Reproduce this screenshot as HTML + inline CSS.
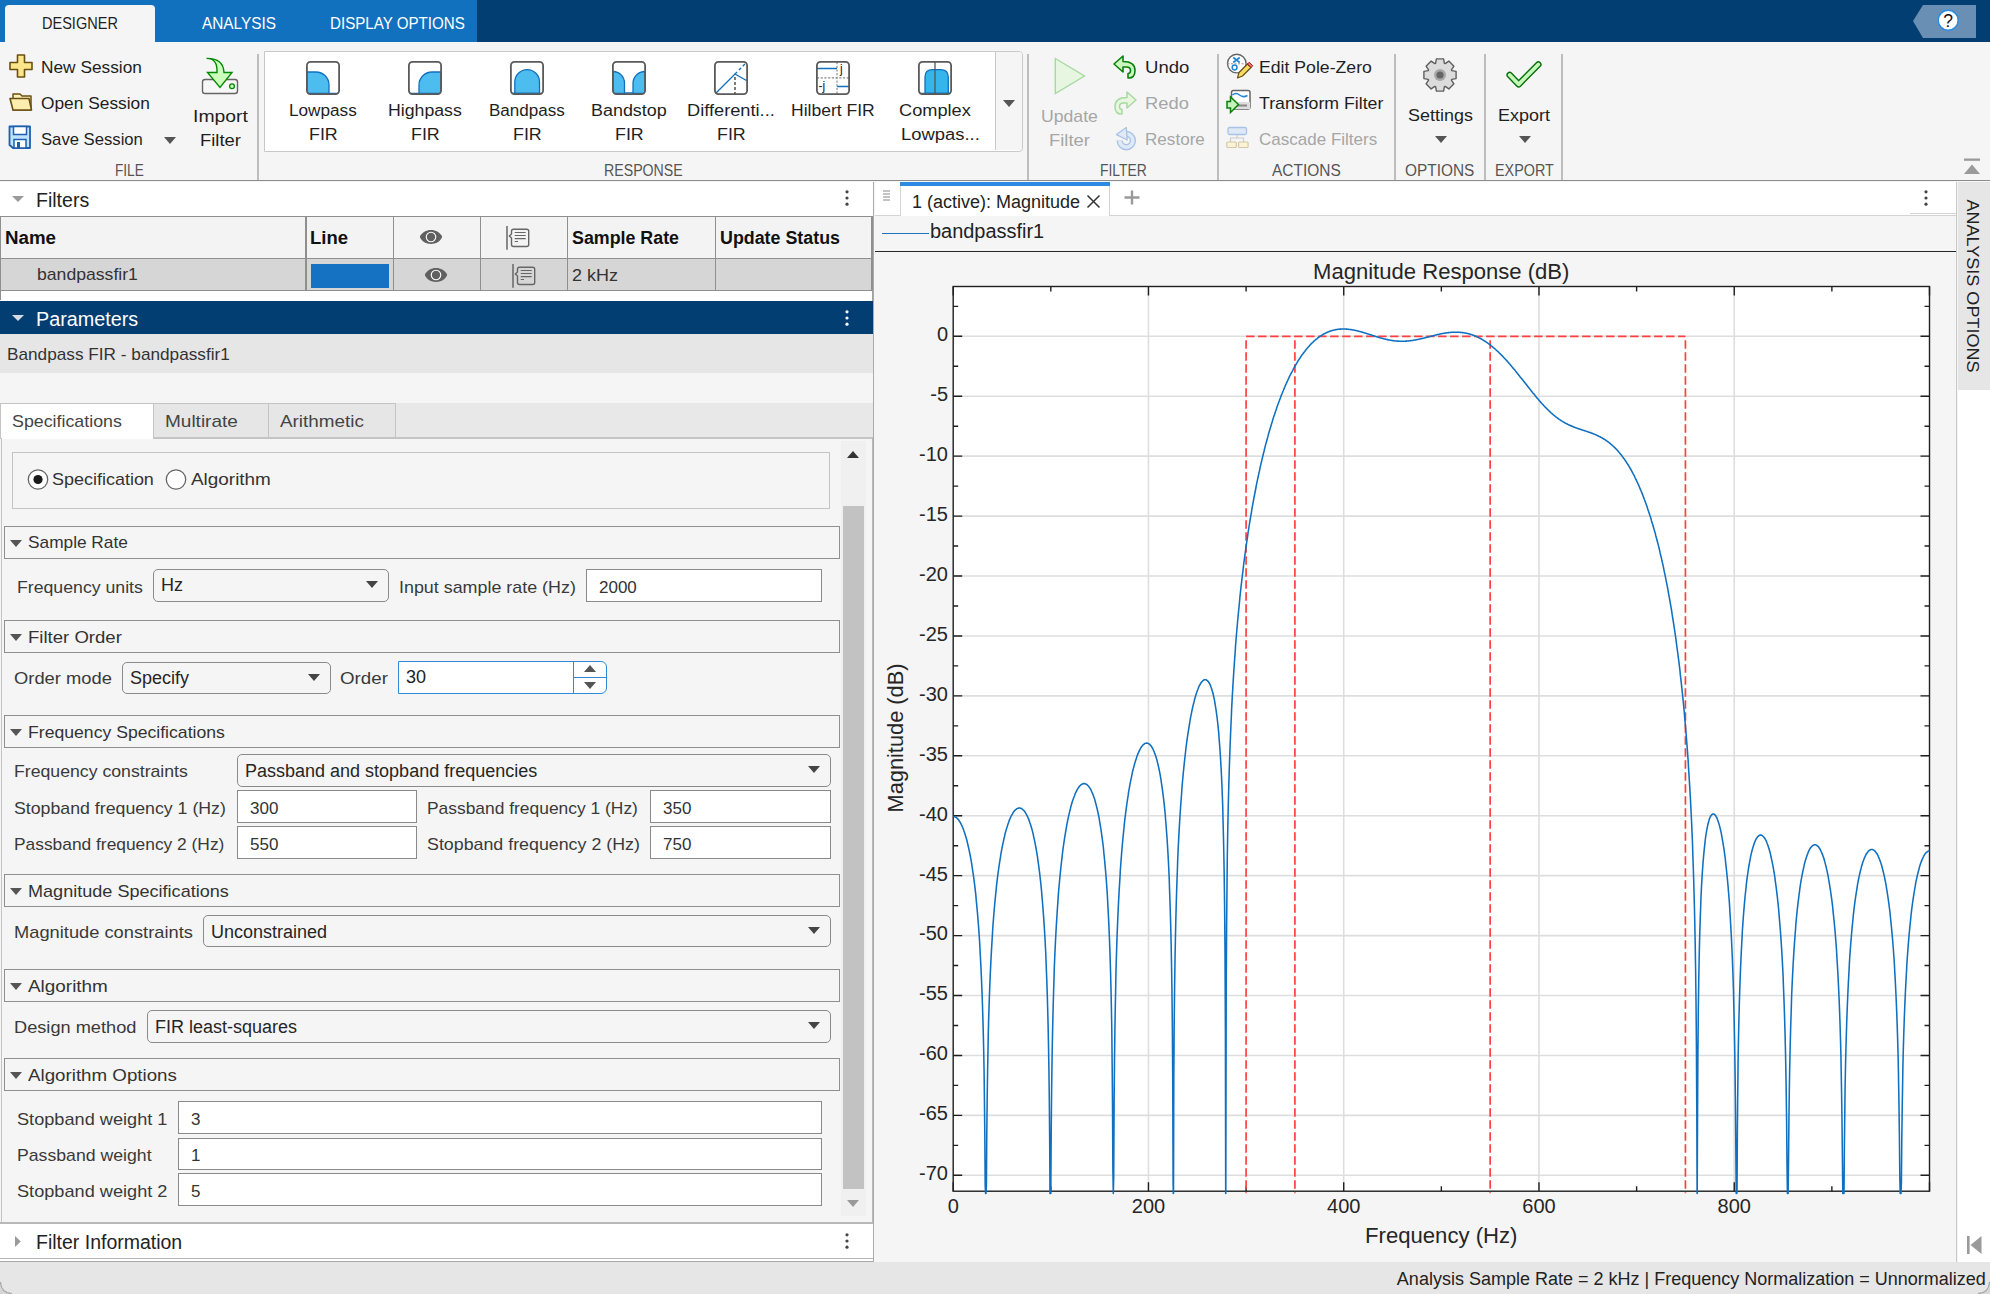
<!DOCTYPE html>
<html><head><meta charset="utf-8"><title>Filter Designer</title>
<style>
html,body{margin:0;padding:0}
body{width:1990px;height:1294px;position:relative;overflow:hidden;background:#f5f5f5;font-family:"Liberation Sans",sans-serif}
.t{position:absolute;line-height:1;white-space:nowrap;transform-origin:0 50%}
.r{position:absolute}
.s{position:absolute;overflow:visible}
</style></head><body>
<div class="r" style="left:0.00px;top:0.00px;width:1990.00px;height:42.00px;background:#033e72"></div>
<div class="r" style="left:0.00px;top:0.00px;width:477.00px;height:42.00px;background:#1171be"></div>
<div class="r" style="left:5.00px;top:5.00px;width:150.00px;height:37.00px;background:#f5f5f5;border-radius:4px 4px 0 0"></div>
<div class="t" style="left:42.06px;top:14.91px;font-size:17.00px;color:#1f1f1f;transform:scaleX(0.8544);">DESIGNER</div>
<div class="t" style="left:201.56px;top:14.91px;font-size:17.00px;color:#fff;transform:scaleX(0.9021);">ANALYSIS</div>
<div class="t" style="left:330.06px;top:14.91px;font-size:17.00px;color:#fff;transform:scaleX(0.8904);">DISPLAY OPTIONS</div>
<svg class="s" style="left:1913.00px;top:5.00px;" width="63.00" height="33.00" viewBox="0 0 63.00 33.00"><path d="M10 0 L63 0 L63 33 L10 33 L0 16 Z" fill="#6990b4"/><circle cx="35.2" cy="15.2" r="10" fill="#fff" stroke="#2b8ce0" stroke-width="1.5"/><text x="35.2" y="21.6" text-anchor="middle" font-family="Liberation Sans" font-size="17.5" fill="#111">?</text></svg>
<div class="r" style="left:0.00px;top:42.00px;width:1990.00px;height:138.00px;background:#f5f5f5"></div>
<div class="r" style="left:0.00px;top:180.00px;width:1990.00px;height:1.20px;background:#8c8c8c"></div>
<div class="r" style="left:257.40px;top:54.00px;width:1.20px;height:126.00px;background:#bdbdbd"></div>
<div class="r" style="left:1027.40px;top:54.00px;width:1.20px;height:126.00px;background:#bdbdbd"></div>
<div class="r" style="left:1217.40px;top:54.00px;width:1.20px;height:126.00px;background:#bdbdbd"></div>
<div class="r" style="left:1394.40px;top:54.00px;width:1.20px;height:126.00px;background:#bdbdbd"></div>
<div class="r" style="left:1484.40px;top:54.00px;width:1.20px;height:126.00px;background:#bdbdbd"></div>
<div class="r" style="left:1561.40px;top:54.00px;width:1.20px;height:126.00px;background:#bdbdbd"></div>
<svg class="s" style="left:9.00px;top:54.00px;" width="24.00" height="24.00" viewBox="0 0 24.00 24.00"><path d="M8.5 1 H15.5 V8.5 H23 V15.5 H15.5 V23 H8.5 V15.5 H1 V8.5 H8.5 Z" fill="#fde68a" stroke="#6b4f12" stroke-width="1.6" stroke-linejoin="round"/></svg>
<div class="t" style="left:41.06px;top:58.61px;font-size:17.00px;color:#1f1f1f;transform:scaleX(1.0167);">New Session</div>
<svg class="s" style="left:9.00px;top:90.00px;" width="24.00" height="22.00" viewBox="0 0 24.00 22.00"><path d="M4 4 H11 L13 6 H22 V20 H4 Z" fill="#fdf0b8" stroke="#6b4f12" stroke-width="1.5" stroke-linejoin="round"/><path d="M1 8.5 H20 L22.5 20 H4 Z" fill="#fdeeb0" stroke="#6b4f12" stroke-width="1.6" stroke-linejoin="round"/></svg>
<div class="t" style="left:41.06px;top:94.61px;font-size:17.00px;color:#1f1f1f;transform:scaleX(1.0195);">Open Session</div>
<svg class="s" style="left:8.00px;top:125.00px;" width="24.00" height="25.00" viewBox="0 0 24.00 25.00"><path d="M1.5 1.5 H22 V23 H5 L1.5 20 Z" fill="#bfe2ff" stroke="#1d5fb0" stroke-width="1.8" stroke-linejoin="round"/><rect x="5.5" y="1.5" width="13" height="8" fill="#fff" stroke="#1d5fb0" stroke-width="1.5"/><rect x="6" y="14.5" width="12" height="8.5" fill="#fff" stroke="#1d5fb0" stroke-width="1.5"/><rect x="9" y="17" width="3" height="6" fill="#1d5fb0"/></svg>
<div class="t" style="left:41.06px;top:130.61px;font-size:17.00px;color:#1f1f1f;transform:scaleX(0.9800);">Save Session</div>
<svg class="s" style="left:164.00px;top:137.00px;" width="12.00" height="7.00" viewBox="0 0 12.00 7.00"><path d="M0 0 L12.00 0 L6.00 7.00 Z" fill="#555"/></svg>
<svg class="s" style="left:200.00px;top:56.00px;" width="40.00" height="40.00" viewBox="0 0 40.00 40.00"><rect x="2.5" y="23.5" width="35" height="14" rx="2.5" fill="#f7f7f7" stroke="#666" stroke-width="1.4"/><circle cx="32" cy="30.3" r="2.4" fill="#ccffbb" stroke="#008a00" stroke-width="1.3"/><path d="M6.5 2.4 C14 2.4 17.5 7 17 16.5 L7.5 16.5 L20 31.5 L32 16.5 L24 16.5 C23.5 7 17 2.2 6.5 2.4 Z" fill="#ccffbb" stroke="#008a00" stroke-width="1.4" stroke-linejoin="miter"/></svg>
<div class="t" style="left:192.56px;top:107.61px;font-size:17.00px;color:#1f1f1f;transform:scaleX(1.1389);">Import</div>
<div class="t" style="left:199.56px;top:131.61px;font-size:17.00px;color:#1f1f1f;transform:scaleX(1.0818);">Filter</div>
<div class="t" style="left:115.12px;top:163.46px;font-size:16.00px;color:#555;transform:scaleX(0.8511);">FILE</div>
<div class="r" style="left:264px;top:51px;width:757px;height:99px;border:1px solid #c9c9c9;border-radius:0 4px 4px 0;background:#fff"></div>
<div class="r" style="left:994.50px;top:52.00px;width:26.50px;height:98.00px;background:#f5f5f5;border-radius:0 3px 3px 0;border-left:1px solid #c9c9c9"></div>
<svg class="s" style="left:1003.00px;top:99.50px;" width="12.00" height="7.00" viewBox="0 0 12.00 7.00"><path d="M0 0 L12.00 0 L6.00 7.00 Z" fill="#555"/></svg>
<svg class="s" style="left:306.00px;top:61.00px;" width="34.00" height="34.00" viewBox="0 0 34.00 34.00"><defs><clipPath id="cp0"><rect x="1" y="1" width="32" height="32" rx="3"/></clipPath></defs><rect x="0" y="0" width="34" height="34" fill="#fff"/><g clip-path="url(#cp0)"><path d="M1 11 H10 A13 13 0 0 1 23 24 V32.4 H1 Z" fill="#4dbcee" stroke="#1170be" stroke-width="1.3"/><path d="M23 32.4 H33" stroke="#1170be" stroke-width="1.3"/></g><rect x="0.9" y="0.9" width="32.2" height="32.2" rx="3.5" fill="none" stroke="#5a5a5a" stroke-width="1.8"/></svg>
<div class="t" style="left:289.12px;top:102.96px;font-size:16.00px;color:#1f1f1f;transform:scaleX(1.0730);">Lowpass</div>
<div class="t" style="left:308.62px;top:127.46px;font-size:16.00px;color:#1f1f1f;transform:scaleX(1.1159);">FIR</div>
<svg class="s" style="left:408.00px;top:61.00px;" width="34.00" height="34.00" viewBox="0 0 34.00 34.00"><defs><clipPath id="cp1"><rect x="1" y="1" width="32" height="32" rx="3"/></clipPath></defs><rect x="0" y="0" width="34" height="34" fill="#fff"/><g clip-path="url(#cp1)"><path d="M33 11 H24 A13 13 0 0 0 11 24 V32.4 H33 Z" fill="#4dbcee" stroke="#1170be" stroke-width="1.3"/><path d="M11 32.4 H1" stroke="#1170be" stroke-width="1.3"/></g><rect x="0.9" y="0.9" width="32.2" height="32.2" rx="3.5" fill="none" stroke="#5a5a5a" stroke-width="1.8"/></svg>
<div class="t" style="left:388.12px;top:102.96px;font-size:16.00px;color:#1f1f1f;transform:scaleX(1.1058);">Highpass</div>
<div class="t" style="left:410.62px;top:127.46px;font-size:16.00px;color:#1f1f1f;transform:scaleX(1.1159);">FIR</div>
<svg class="s" style="left:510.00px;top:61.00px;" width="34.00" height="34.00" viewBox="0 0 34.00 34.00"><defs><clipPath id="cp2"><rect x="1" y="1" width="32" height="32" rx="3"/></clipPath></defs><rect x="0" y="0" width="34" height="34" fill="#fff"/><g clip-path="url(#cp2)"><path d="M4.8 32.4 V21 A12.35 12.35 0 0 1 29.5 21 V32.4 Z" fill="#4dbcee" stroke="#1170be" stroke-width="1.3"/><path d="M1 32.4 H33" stroke="#1170be" stroke-width="1.3"/></g><rect x="0.9" y="0.9" width="32.2" height="32.2" rx="3.5" fill="none" stroke="#5a5a5a" stroke-width="1.8"/></svg>
<div class="t" style="left:489.12px;top:102.96px;font-size:16.00px;color:#1f1f1f;transform:scaleX(1.0645);">Bandpass</div>
<div class="t" style="left:512.62px;top:127.46px;font-size:16.00px;color:#1f1f1f;transform:scaleX(1.1159);">FIR</div>
<svg class="s" style="left:612.00px;top:61.00px;" width="34.00" height="34.00" viewBox="0 0 34.00 34.00"><defs><clipPath id="cp3"><rect x="1" y="1" width="32" height="32" rx="3"/></clipPath></defs><rect x="0" y="0" width="34" height="34" fill="#fff"/><g clip-path="url(#cp3)"><path d="M1 10.5 A11.5 11.5 0 0 1 12.5 22 V32.4 H1 Z M33 10.5 A12 12 0 0 0 21 22.5 V32.4 H33 Z" fill="#4dbcee" stroke="#1170be" stroke-width="1.3"/><path d="M12.5 32 H21" stroke="#1170be" stroke-width="1.6"/></g><rect x="0.9" y="0.9" width="32.2" height="32.2" rx="3.5" fill="none" stroke="#5a5a5a" stroke-width="1.8"/></svg>
<div class="t" style="left:591.12px;top:102.96px;font-size:16.00px;color:#1f1f1f;transform:scaleX(1.1205);">Bandstop</div>
<div class="t" style="left:614.62px;top:127.46px;font-size:16.00px;color:#1f1f1f;transform:scaleX(1.1159);">FIR</div>
<svg class="s" style="left:714.00px;top:61.00px;" width="34.00" height="34.00" viewBox="0 0 34.00 34.00"><defs><clipPath id="cp4"><rect x="1" y="1" width="32" height="32" rx="3"/></clipPath></defs><rect x="0" y="0" width="34" height="34" fill="#fff"/><g clip-path="url(#cp4)"><path d="M1.5 32.5 L21 13 L32.5 19.5" fill="none" stroke="#1170be" stroke-width="1.4"/><path d="M21 13 L31 3" fill="none" stroke="#1170be" stroke-width="1.4" stroke-dasharray="3 2.5"/><path d="M21 16 V33" stroke="#333" stroke-width="1.3" stroke-dasharray="3 2"/></g><rect x="0.9" y="0.9" width="32.2" height="32.2" rx="3.5" fill="none" stroke="#5a5a5a" stroke-width="1.8"/></svg>
<div class="t" style="left:687.12px;top:102.96px;font-size:16.00px;color:#1f1f1f;transform:scaleX(1.1387);">Differenti...</div>
<div class="t" style="left:716.62px;top:127.46px;font-size:16.00px;color:#1f1f1f;transform:scaleX(1.1159);">FIR</div>
<svg class="s" style="left:816.00px;top:61.00px;" width="34.00" height="34.00" viewBox="0 0 34.00 34.00"><defs><clipPath id="cp5"><rect x="1" y="1" width="32" height="32" rx="3"/></clipPath></defs><rect x="0" y="0" width="34" height="34" fill="#fff"/><g clip-path="url(#cp5)"><path d="M1 7.5 H21" stroke="#1170be" stroke-width="1.4"/><path d="M21 25.5 H33" stroke="#1170be" stroke-width="1.4"/><path d="M1 16.8 H33 M21 1 V33" stroke="#8a8a8a" stroke-width="1.2" stroke-dasharray="2.2 1.5"/><text x="24" y="12" font-family="Liberation Sans" font-size="12" fill="#222">j</text><text x="2.5" y="28.5" font-family="Liberation Sans" font-size="12" fill="#222">-j</text></g><rect x="0.9" y="0.9" width="32.2" height="32.2" rx="3.5" fill="none" stroke="#5a5a5a" stroke-width="1.8"/></svg>
<div class="t" style="left:791.12px;top:102.96px;font-size:16.00px;color:#1f1f1f;transform:scaleX(1.0955);">Hilbert FIR</div>
<svg class="s" style="left:918.00px;top:61.00px;" width="34.00" height="34.00" viewBox="0 0 34.00 34.00"><defs><clipPath id="cp6"><rect x="1" y="1" width="32" height="32" rx="3"/></clipPath></defs><rect x="0" y="0" width="34" height="34" fill="#fff"/><g clip-path="url(#cp6)"><path d="M7 32.4 V16 Q7 8.7 14.5 8.7 H22.5 Q30.3 8.7 30.3 16 V32.4 Z" fill="#34b6ec" stroke="#1170be" stroke-width="1.3"/><path d="M1 32.4 H33" stroke="#1170be" stroke-width="1.3"/><path d="M17 1 V33" stroke="#555" stroke-width="1.3"/></g><rect x="0.9" y="0.9" width="32.2" height="32.2" rx="3.5" fill="none" stroke="#5a5a5a" stroke-width="1.8"/></svg>
<div class="t" style="left:899.12px;top:102.96px;font-size:16.00px;color:#1f1f1f;transform:scaleX(1.1366);">Complex</div>
<div class="t" style="left:900.62px;top:127.46px;font-size:16.00px;color:#1f1f1f;transform:scaleX(1.1500);">Lowpas...</div>
<div class="t" style="left:604.12px;top:163.46px;font-size:16.00px;color:#555;transform:scaleX(0.8858);">RESPONSE</div>
<svg class="s" style="left:1053.00px;top:56.00px;" width="36.00" height="40.00" viewBox="0 0 36.00 40.00"><path d="M2.3 2.5 L31.5 20 L2.3 37.5 Z" fill="#e6f6e0" stroke="#a9d9a0" stroke-width="1.4" stroke-linejoin="miter"/></svg>
<div class="t" style="left:1040.57px;top:107.61px;font-size:17.00px;color:#a6a6a6;transform:scaleX(1.0374);">Update</div>
<div class="t" style="left:1048.57px;top:131.61px;font-size:17.00px;color:#a6a6a6;transform:scaleX(1.0818);">Filter</div>
<svg class="s" style="left:1111.00px;top:53.00px;" width="28.00" height="28.00" viewBox="0 0 28.00 28.00"><path d="M3 11 L12 3 V8.5 Q24 8.5 24 17.5 Q24 25.5 17 25 V20.5 Q19.5 20.5 19.5 17.5 Q19.5 14 15.5 14 L12 14 V19 Z" fill="#ccf5c0" stroke="#0a800a" stroke-width="1.6" stroke-linejoin="round"/></svg>
<div class="t" style="left:1145.07px;top:58.61px;font-size:17.00px;color:#1f1f1f;transform:scaleX(1.0917);">Undo</div>
<svg class="s" style="left:1111.00px;top:89.00px;" width="28.00" height="28.00" viewBox="0 0 28.00 28.00"><path d="M25 11 L16 3 V8.5 Q4 8.5 4 17.5 Q4 25.5 11 25 V20.5 Q8.5 20.5 8.5 17.5 Q8.5 14 12.5 14 L16 14 V19 Z" fill="#e6f6e0" stroke="#a9d9a0" stroke-width="1.5" stroke-linejoin="round"/></svg>
<div class="t" style="left:1145.07px;top:94.61px;font-size:17.00px;color:#a6a6a6;transform:scaleX(1.0794);">Redo</div>
<svg class="s" style="left:1113.00px;top:126.00px;" width="26.00" height="26.00" viewBox="0 0 26.00 26.00"><path d="M13.3 8 A6.6 6.6 0 1 1 6.7 14.6" fill="none" stroke="#a9c3e6" stroke-width="6.4"/><path d="M13.3 8 A6.6 6.6 0 1 1 6.7 14.6" fill="none" stroke="#deeaf8" stroke-width="3.6"/><path d="M13.3 1.4 L3.5 8.6 L14.2 14 Z" fill="#deeaf8" stroke="#a9c3e6" stroke-width="1.3" stroke-linejoin="round"/></svg>
<div class="t" style="left:1145.07px;top:130.61px;font-size:17.00px;color:#a6a6a6;transform:scaleX(1.0058);">Restore</div>
<div class="t" style="left:1099.62px;top:163.46px;font-size:16.00px;color:#555;transform:scaleX(0.8670);">FILTER</div>
<svg class="s" style="left:1226.00px;top:53.00px;" width="30.00" height="30.00" viewBox="0 0 30.00 30.00"><circle cx="10.8" cy="10.6" r="9.3" fill="#fff" stroke="#666" stroke-width="1.4"/><path d="M1.5 10.8 H20.5" stroke="#999" stroke-width="1" stroke-dasharray="2 1.5"/><path d="M7.2 4.5 L13.7 9.5 M13.7 4.5 L7.2 9.5" stroke="#1f86d6" stroke-width="1.7"/><circle cx="8.6" cy="14.5" r="2.4" fill="none" stroke="#1f86d6" stroke-width="1.5"/><path d="M11.5 25 L13 19.5 L21.5 11 L25 14.5 L16.5 23 Z" fill="#f6dc63" stroke="#6b4f12" stroke-width="1.2" stroke-linejoin="round"/><path d="M21.5 11 L23.2 9.3 L26.7 12.8 L25 14.5 Z" fill="#f08080" stroke="#a01010" stroke-width="1"/></svg>
<div class="t" style="left:1259.07px;top:58.61px;font-size:17.00px;color:#1f1f1f;transform:scaleX(1.0387);">Edit Pole-Zero</div>
<svg class="s" style="left:1226.00px;top:89.00px;" width="30.00" height="30.00" viewBox="0 0 30.00 30.00"><rect x="5.5" y="1.5" width="18.5" height="18.5" rx="2" fill="#fff" stroke="#666" stroke-width="1.5"/><path d="M5.5 13 H24 V20 H5.5 Z" fill="#ddd"/><path d="M10 16.5 H21" stroke="#888" stroke-width="2"/><path d="M6.5 6 Q10 3 13.5 6 T21.5 6.5" fill="none" stroke="#1f86d6" stroke-width="1.5"/><path d="M1 12.5 H4.5 V8 L12.5 15.5 L4.5 23.5 V19 H1 Z" fill="#c4f4bb" stroke="#0a800a" stroke-width="1.5" stroke-linejoin="miter"/></svg>
<div class="t" style="left:1259.07px;top:94.61px;font-size:17.00px;color:#1f1f1f;transform:scaleX(1.0423);">Transform Filter</div>
<svg class="s" style="left:1226.00px;top:126.00px;" width="30.00" height="26.00" viewBox="0 0 30.00 26.00"><rect x="2" y="1.5" width="18.5" height="7" rx="1.5" fill="#dde9f7" stroke="#a9c3e6" stroke-width="1.3"/><path d="M11 8.5 V12 M4.5 16 V12 H17.5 V16" fill="none" stroke="#ccc" stroke-width="1.2"/><rect x="0.8" y="16" width="9.5" height="5.5" rx="1" fill="#fbf3d4" stroke="#d4c9a4" stroke-width="1.2"/><rect x="12.6" y="16" width="9.5" height="5.5" rx="1" fill="#fbf3d4" stroke="#d4c9a4" stroke-width="1.2"/></svg>
<div class="t" style="left:1259.07px;top:130.61px;font-size:17.00px;color:#a6a6a6;">Cascade Filters</div>
<div class="t" style="left:1271.62px;top:163.46px;font-size:16.00px;color:#555;transform:scaleX(0.9668);">ACTIONS</div>
<svg class="s" style="left:1420.00px;top:55.00px;" width="40.00" height="40.00" viewBox="0 0 40.00 40.00"><path d="M15.60 8.30 L16.40 3.90 L23.60 3.90 L24.40 8.30 L25.16 8.61 L28.84 6.07 L33.93 11.16 L31.39 14.84 L31.70 15.60 L36.10 16.40 L36.10 23.60 L31.70 24.40 L31.39 25.16 L33.93 28.84 L28.84 33.93 L25.16 31.39 L24.40 31.70 L23.60 36.10 L16.40 36.10 L15.60 31.70 L14.84 31.39 L11.16 33.93 L6.07 28.84 L8.61 25.16 L8.30 24.40 L3.90 23.60 L3.90 16.40 L8.30 15.60 L8.61 14.84 L6.07 11.16 L11.16 6.07 L14.84 8.61 Z" fill="#dcdcdc" stroke="#5f5f5f" stroke-width="1.4" stroke-linejoin="round"/><circle cx="20" cy="20" r="6" fill="#a8a8a8"/><circle cx="20" cy="20" r="3.6" fill="#666"/></svg>
<div class="t" style="left:1407.57px;top:107.11px;font-size:17.00px;color:#1f1f1f;transform:scaleX(1.0560);">Settings</div>
<svg class="s" style="left:1435.00px;top:135.50px;" width="12.00" height="7.00" viewBox="0 0 12.00 7.00"><path d="M0 0 L12.00 0 L6.00 7.00 Z" fill="#555"/></svg>
<div class="t" style="left:1405.37px;top:163.46px;font-size:16.00px;color:#555;transform:scaleX(0.9618);">OPTIONS</div>
<svg class="s" style="left:1503.00px;top:55.00px;" width="40.00" height="40.00" viewBox="0 0 40.00 40.00"><path d="M6.7 20 L15.6 29.3 L35.3 9.5" fill="none" stroke="#0a6e0a" stroke-width="6.6" stroke-linecap="round" stroke-linejoin="round"/><path d="M6.7 20 L15.6 29.3 L35.3 9.5" fill="none" stroke="#c4f8b8" stroke-width="3.8" stroke-linecap="round" stroke-linejoin="round"/></svg>
<div class="t" style="left:1498.07px;top:107.11px;font-size:17.00px;color:#1f1f1f;transform:scaleX(1.0557);">Export</div>
<svg class="s" style="left:1519.00px;top:135.50px;" width="12.00" height="7.00" viewBox="0 0 12.00 7.00"><path d="M0 0 L12.00 0 L6.00 7.00 Z" fill="#555"/></svg>
<div class="t" style="left:1494.62px;top:163.46px;font-size:16.00px;color:#555;transform:scaleX(0.8971);">EXPORT</div>
<svg class="s" style="left:1963.00px;top:158.00px;" width="18.00" height="17.00" viewBox="0 0 18.00 17.00"><rect x="1" y="0.5" width="16" height="2.3" fill="#9a9a9a"/><path d="M1 16 L9 6.5 L17 16 Z" fill="#9a9a9a"/></svg>
<div class="r" style="left:0.00px;top:181.50px;width:873.00px;height:1080.50px;background:#f5f5f5"></div>
<div class="r" style="left:0.00px;top:181.50px;width:873.00px;height:34.50px;background:#fff"></div>
<svg class="s" style="left:12.00px;top:196.00px;" width="12.00" height="6.00" viewBox="0 0 12.00 6.00"><path d="M0 0 H12.00 L6.00 6.00 Z" fill="#9a9a9a"/></svg>
<div class="t" style="left:35.90px;top:189.87px;font-size:20.00px;color:#222;transform:scaleX(0.9771);">Filters</div>
<svg class="s" style="left:844.00px;top:189.00px;" width="6.00" height="18.00" viewBox="0 0 6.00 18.00"><circle cx="3" cy="2.8" r="1.6" fill="#444"/><circle cx="3" cy="9" r="1.6" fill="#444"/><circle cx="3" cy="15.2" r="1.6" fill="#444"/></svg>
<div class="r" style="left:0.00px;top:216.00px;width:873.00px;height:75.00px;background:#f3f3f3"></div>
<div class="r" style="left:1.00px;top:258.00px;width:871.00px;height:33.00px;background:#d6d6d6"></div>
<div class="r" style="left:0.00px;top:291.00px;width:873.00px;height:9.50px;background:#fff"></div>
<div class="r" style="left:871.80px;top:291.00px;width:1.00px;height:9.50px;background:#a0a0a0"></div>
<div class="r" style="left:0.00px;top:215.50px;width:873.00px;height:1.50px;background:#8f8f8f"></div>
<div class="r" style="left:0.00px;top:257.50px;width:872.00px;height:1.20px;background:#8f8f8f"></div>
<div class="r" style="left:0.00px;top:290.30px;width:872.00px;height:1.20px;background:#8f8f8f"></div>
<div class="r" style="left:0.00px;top:216.00px;width:1.10px;height:84.00px;background:#8f8f8f"></div>
<div class="r" style="left:305.40px;top:216.00px;width:1.20px;height:75.00px;background:#8f8f8f"></div>
<div class="r" style="left:393.00px;top:216.00px;width:1.20px;height:75.00px;background:#8f8f8f"></div>
<div class="r" style="left:479.90px;top:216.00px;width:1.20px;height:75.00px;background:#8f8f8f"></div>
<div class="r" style="left:566.80px;top:216.00px;width:1.20px;height:75.00px;background:#8f8f8f"></div>
<div class="r" style="left:714.80px;top:216.00px;width:1.20px;height:75.00px;background:#8f8f8f"></div>
<div class="r" style="left:871.40px;top:216.00px;width:1.20px;height:75.00px;background:#8f8f8f"></div>
<div class="t" style="left:5.01px;top:228.76px;font-size:18.00px;color:#111;font-weight:bold;transform:scaleX(1.0399);">Name</div>
<div class="t" style="left:310.01px;top:228.76px;font-size:18.00px;color:#111;font-weight:bold;transform:scaleX(1.0264);">Line</div>
<div class="t" style="left:572.01px;top:228.76px;font-size:18.00px;color:#111;font-weight:bold;transform:scaleX(0.9901);">Sample Rate</div>
<div class="t" style="left:720.01px;top:228.76px;font-size:18.00px;color:#111;font-weight:bold;transform:scaleX(0.9914);">Update Status</div>
<svg class="s" style="left:419.40px;top:229.00px;" width="24.00" height="16.00" viewBox="0 0 24.00 16.00"><path d="M0.8 8 C4.5 -1.2 19.5 -1.2 23.2 8 C19.5 17.2 4.5 17.2 0.8 8 Z" fill="#606060"/><circle cx="12" cy="8" r="5.3" fill="#fff"/><circle cx="12" cy="8" r="4.2" fill="#606060"/></svg>
<svg class="s" style="left:506.30px;top:226.00px;" width="24.00" height="24.00" viewBox="0 0 24.00 24.00"><path d="M1 0 V23.7" stroke="#666" stroke-width="1.5"/><path d="M7.5 3.2 H20.7 Q22.7 3.2 22.7 5.2 V18.5 Q22.7 20.5 20.7 20.5 H7.5 Q5.5 20.5 5.5 18.5 V12 L3.4 10 L5.5 8 V5.2 Q5.5 3.2 7.5 3.2 Z" fill="none" stroke="#666" stroke-width="1.4"/><path d="M8.7 6.5 H19.7 M8.7 9.5 H19.7 M8.7 12.6 H19.7 M8.7 15.5 H12" stroke="#666" stroke-width="1.2"/></svg>
<div class="t" style="left:37.06px;top:266.31px;font-size:17.00px;color:#333;transform:scaleX(1.0362);">bandpassfir1</div>
<div class="r" style="left:311.00px;top:264.00px;width:77.50px;height:24.00px;background:#1571c1"></div>
<svg class="s" style="left:424.20px;top:267.00px;" width="24.00" height="16.00" viewBox="0 0 24.00 16.00"><path d="M0.8 8 C4.5 -1.2 19.5 -1.2 23.2 8 C19.5 17.2 4.5 17.2 0.8 8 Z" fill="#606060"/><circle cx="12" cy="8" r="5.3" fill="#fff"/><circle cx="12" cy="8" r="4.2" fill="#606060"/></svg>
<svg class="s" style="left:511.50px;top:264.30px;" width="24.00" height="24.00" viewBox="0 0 24.00 24.00"><path d="M1 0 V23.7" stroke="#666" stroke-width="1.5"/><path d="M7.5 3.2 H20.7 Q22.7 3.2 22.7 5.2 V18.5 Q22.7 20.5 20.7 20.5 H7.5 Q5.5 20.5 5.5 18.5 V12 L3.4 10 L5.5 8 V5.2 Q5.5 3.2 7.5 3.2 Z" fill="none" stroke="#666" stroke-width="1.4"/><path d="M8.7 6.5 H19.7 M8.7 9.5 H19.7 M8.7 12.6 H19.7 M8.7 15.5 H12" stroke="#666" stroke-width="1.2"/></svg>
<div class="t" style="left:572.07px;top:266.61px;font-size:17.00px;color:#333;transform:scaleX(1.0556);">2 kHz</div>
<div class="r" style="left:0.00px;top:300.50px;width:873.00px;height:33.50px;background:#033e72"></div>
<svg class="s" style="left:12.00px;top:315.00px;" width="12.00" height="6.00" viewBox="0 0 12.00 6.00"><path d="M0 0 H12.00 L6.00 6.00 Z" fill="#d4dbe3"/></svg>
<div class="t" style="left:35.90px;top:309.07px;font-size:20.00px;color:#fff;transform:scaleX(0.9886);">Parameters</div>
<svg class="s" style="left:844.00px;top:309.00px;" width="6.00" height="18.00" viewBox="0 0 6.00 18.00"><circle cx="3" cy="2.8" r="1.6" fill="#fff"/><circle cx="3" cy="9" r="1.6" fill="#fff"/><circle cx="3" cy="15.2" r="1.6" fill="#fff"/></svg>
<div class="r" style="left:0.00px;top:334.00px;width:873.00px;height:38.50px;background:#e6e6e6"></div>
<div class="t" style="left:7.06px;top:346.31px;font-size:17.00px;color:#333;transform:scaleX(1.0122);">Bandpass FIR - bandpassfir1</div>
<div class="r" style="left:0.00px;top:403.00px;width:873.00px;height:35.00px;background:#e8e8e8"></div>
<div class="r" style="left:0.00px;top:437.00px;width:873.00px;height:1.50px;background:#c4c4c4"></div>
<div class="r" style="left:0px;top:403px;width:154px;height:35.5px;background:#fff;border:1px solid #c4c4c4;border-bottom:none;box-sizing:border-box"></div>
<div class="r" style="left:153px;top:403px;width:116px;height:35px;background:#e6e6e6;border:1px solid #c4c4c4;box-sizing:border-box"></div>
<div class="r" style="left:268px;top:403px;width:128px;height:35px;background:#e6e6e6;border:1px solid #c4c4c4;box-sizing:border-box"></div>
<div class="t" style="left:12.06px;top:412.61px;font-size:17.00px;color:#444;transform:scaleX(1.0475);">Specifications</div>
<div class="t" style="left:165.06px;top:412.61px;font-size:17.00px;color:#444;transform:scaleX(1.1178);">Multirate</div>
<div class="t" style="left:280.06px;top:412.61px;font-size:17.00px;color:#444;transform:scaleX(1.1098);">Arithmetic</div>
<div class="r" style="left:0.50px;top:438.00px;width:1.20px;height:785.00px;background:#c4c4c4"></div>
<div class="r" style="left:0.00px;top:1222.00px;width:873.00px;height:2.00px;background:#b8b8b8"></div>
<div class="r" style="left:872.00px;top:438.00px;width:2.00px;height:786.00px;background:#b8b8b8"></div>
<div class="r" style="left:841.00px;top:441.00px;width:25.00px;height:775.00px;background:#f0f0f0"></div>
<div class="r" style="left:843.00px;top:506.00px;width:21.00px;height:682.60px;background:#c2c2c2"></div>
<svg class="s" style="left:847.00px;top:451.00px;" width="12.00" height="7.00" viewBox="0 0 12.00 7.00"><path d="M0 7 H12 L6 0 Z" fill="#333"/></svg>
<svg class="s" style="left:847.00px;top:1200.00px;" width="12.00" height="7.00" viewBox="0 0 12.00 7.00"><path d="M0 0 H12.00 L6.00 7.00 Z" fill="#999"/></svg>
<div class="r" style="left:12px;top:452px;width:818px;height:57px;border:1px solid #c4c4c4;box-sizing:border-box"></div>
<svg class="s" style="left:27.00px;top:469.00px;" width="22.00" height="22.00" viewBox="0 0 22.00 22.00"><circle cx="11" cy="10.5" r="9.7" fill="#fff" stroke="#666" stroke-width="1.3"/><circle cx="11" cy="10.5" r="4.6" fill="#1a1a1a"/></svg>
<div class="t" style="left:52.06px;top:471.21px;font-size:17.00px;color:#333;transform:scaleX(1.0568);">Specification</div>
<svg class="s" style="left:165.00px;top:469.00px;" width="22.00" height="22.00" viewBox="0 0 22.00 22.00"><circle cx="11" cy="10.5" r="9.7" fill="#fff" stroke="#666" stroke-width="1.3"/></svg>
<div class="t" style="left:191.06px;top:471.21px;font-size:17.00px;color:#333;transform:scaleX(1.1123);">Algorithm</div>
<div class="r" style="left:4px;top:525.50px;width:835.5px;height:33.00px;border:1px solid #8f8f8f;box-sizing:border-box"></div>
<svg class="s" style="left:10.00px;top:539.50px;" width="12.00" height="7.00" viewBox="0 0 12.00 7.00"><path d="M0 0 H12.00 L6.00 7.00 Z" fill="#555"/></svg>
<div class="t" style="left:28.07px;top:534.31px;font-size:17.00px;color:#333;transform:scaleX(1.0162);">Sample Rate</div>
<div class="t" style="left:17.07px;top:578.61px;font-size:17.00px;color:#3a3a3a;transform:scaleX(1.0406);">Frequency units</div>
<div class="r" style="left:153.00px;top:569.00px;width:235.50px;height:32.50px;border:1px solid #8a8a8a;box-sizing:border-box;border-radius:5px;background:#f5f5f5"></div>
<div class="t" style="left:161.00px;top:576.26px;font-size:18.00px;color:#262626;">Hz</div>
<svg class="s" style="left:365.50px;top:581.00px;" width="12.00" height="7.00" viewBox="0 0 12.00 7.00"><path d="M0 0 H12.00 L6.00 7.00 Z" fill="#444"/></svg>
<div class="t" style="left:399.06px;top:578.61px;font-size:17.00px;color:#3a3a3a;transform:scaleX(1.0517);">Input sample rate (Hz)</div>
<div class="r" style="left:586.00px;top:569.00px;width:236.00px;height:33.00px;border:1px solid #8a8a8a;box-sizing:border-box;background:#fff"></div>
<div class="t" style="left:599.00px;top:578.61px;font-size:17.00px;color:#333;">2000</div>
<div class="r" style="left:4px;top:620.00px;width:835.5px;height:33.00px;border:1px solid #8f8f8f;box-sizing:border-box"></div>
<svg class="s" style="left:10.00px;top:634.00px;" width="12.00" height="7.00" viewBox="0 0 12.00 7.00"><path d="M0 0 H12.00 L6.00 7.00 Z" fill="#555"/></svg>
<div class="t" style="left:28.07px;top:628.81px;font-size:17.00px;color:#333;transform:scaleX(1.0921);">Filter Order</div>
<div class="t" style="left:14.06px;top:669.61px;font-size:17.00px;color:#3a3a3a;transform:scaleX(1.0790);">Order mode</div>
<div class="r" style="left:122.00px;top:661.50px;width:208.50px;height:32.50px;border:1px solid #8a8a8a;box-sizing:border-box;border-radius:5px;background:#f5f5f5"></div>
<div class="t" style="left:130.00px;top:668.76px;font-size:18.00px;color:#262626;">Specify</div>
<svg class="s" style="left:307.50px;top:673.50px;" width="12.00" height="7.00" viewBox="0 0 12.00 7.00"><path d="M0 0 H12.00 L6.00 7.00 Z" fill="#444"/></svg>
<div class="t" style="left:340.06px;top:669.61px;font-size:17.00px;color:#3a3a3a;transform:scaleX(1.1016);">Order</div>
<div class="r" style="left:398px;top:661px;width:209px;height:32.5px;border:1.3px solid #2f8ad9;box-sizing:border-box;border-radius:0 6px 6px 0;background:#fff"></div>
<div class="r" style="left:572.80px;top:662.00px;width:1.20px;height:30.50px;background:#2f8ad9"></div>
<div class="r" style="left:574.00px;top:676.60px;width:32.00px;height:1.20px;background:#2f8ad9"></div>
<div class="t" style="left:406.00px;top:667.76px;font-size:18.00px;color:#222;">30</div>
<svg class="s" style="left:584.00px;top:665.00px;" width="12.00" height="7.00" viewBox="0 0 12.00 7.00"><path d="M0 7 H12 L6 0 Z" fill="#555"/></svg>
<svg class="s" style="left:584.00px;top:682.00px;" width="12.00" height="7.00" viewBox="0 0 12.00 7.00"><path d="M0 0 H12.00 L6.00 7.00 Z" fill="#555"/></svg>
<div class="r" style="left:4px;top:714.80px;width:835.5px;height:33.00px;border:1px solid #8f8f8f;box-sizing:border-box"></div>
<svg class="s" style="left:10.00px;top:728.80px;" width="12.00" height="7.00" viewBox="0 0 12.00 7.00"><path d="M0 0 H12.00 L6.00 7.00 Z" fill="#555"/></svg>
<div class="t" style="left:28.07px;top:723.61px;font-size:17.00px;color:#333;transform:scaleX(1.0365);">Frequency Specifications</div>
<div class="t" style="left:14.06px;top:763.41px;font-size:17.00px;color:#3a3a3a;transform:scaleX(1.0396);">Frequency constraints</div>
<div class="r" style="left:237.00px;top:754.40px;width:593.50px;height:32.20px;border:1px solid #8a8a8a;box-sizing:border-box;border-radius:5px;background:#f5f5f5"></div>
<div class="t" style="left:245.00px;top:761.66px;font-size:18.00px;color:#262626;">Passband and stopband frequencies</div>
<svg class="s" style="left:807.50px;top:766.40px;" width="12.00" height="7.00" viewBox="0 0 12.00 7.00"><path d="M0 0 H12.00 L6.00 7.00 Z" fill="#444"/></svg>
<div class="t" style="left:14.06px;top:799.61px;font-size:17.00px;color:#3a3a3a;transform:scaleX(1.0428);">Stopband frequency 1 (Hz)</div>
<div class="r" style="left:237.00px;top:790.00px;width:180.00px;height:32.70px;border:1px solid #8a8a8a;box-sizing:border-box;background:#fff"></div>
<div class="t" style="left:250.00px;top:799.61px;font-size:17.00px;color:#333;">300</div>
<div class="t" style="left:427.06px;top:799.61px;font-size:17.00px;color:#3a3a3a;transform:scaleX(1.0237);">Passband frequency 1 (Hz)</div>
<div class="r" style="left:650.00px;top:790.00px;width:180.50px;height:32.70px;border:1px solid #8a8a8a;box-sizing:border-box;background:#fff"></div>
<div class="t" style="left:663.00px;top:799.61px;font-size:17.00px;color:#333;">350</div>
<div class="t" style="left:14.06px;top:835.61px;font-size:17.00px;color:#3a3a3a;transform:scaleX(1.0212);">Passband frequency 2 (Hz)</div>
<div class="r" style="left:237.00px;top:826.00px;width:180.00px;height:32.70px;border:1px solid #8a8a8a;box-sizing:border-box;background:#fff"></div>
<div class="t" style="left:250.00px;top:835.61px;font-size:17.00px;color:#333;">550</div>
<div class="t" style="left:427.06px;top:835.61px;font-size:17.00px;color:#3a3a3a;transform:scaleX(1.0477);">Stopband frequency 2 (Hz)</div>
<div class="r" style="left:650.00px;top:826.00px;width:180.50px;height:32.70px;border:1px solid #8a8a8a;box-sizing:border-box;background:#fff"></div>
<div class="t" style="left:663.00px;top:835.61px;font-size:17.00px;color:#333;">750</div>
<div class="r" style="left:4px;top:874.40px;width:835.5px;height:33.00px;border:1px solid #8f8f8f;box-sizing:border-box"></div>
<svg class="s" style="left:10.00px;top:888.40px;" width="12.00" height="7.00" viewBox="0 0 12.00 7.00"><path d="M0 0 H12.00 L6.00 7.00 Z" fill="#555"/></svg>
<div class="t" style="left:28.07px;top:883.21px;font-size:17.00px;color:#333;transform:scaleX(1.0628);">Magnitude Specifications</div>
<div class="t" style="left:14.06px;top:924.11px;font-size:17.00px;color:#3a3a3a;transform:scaleX(1.0755);">Magnitude constraints</div>
<div class="r" style="left:203.00px;top:915.30px;width:627.50px;height:32.20px;border:1px solid #8a8a8a;box-sizing:border-box;border-radius:5px;background:#f5f5f5"></div>
<div class="t" style="left:211.00px;top:922.56px;font-size:18.00px;color:#262626;">Unconstrained</div>
<svg class="s" style="left:807.50px;top:927.30px;" width="12.00" height="7.00" viewBox="0 0 12.00 7.00"><path d="M0 0 H12.00 L6.00 7.00 Z" fill="#444"/></svg>
<div class="r" style="left:4px;top:969.40px;width:835.5px;height:33.00px;border:1px solid #8f8f8f;box-sizing:border-box"></div>
<svg class="s" style="left:10.00px;top:983.40px;" width="12.00" height="7.00" viewBox="0 0 12.00 7.00"><path d="M0 0 H12.00 L6.00 7.00 Z" fill="#555"/></svg>
<div class="t" style="left:28.07px;top:978.21px;font-size:17.00px;color:#333;transform:scaleX(1.1123);">Algorithm</div>
<div class="t" style="left:14.06px;top:1019.21px;font-size:17.00px;color:#3a3a3a;transform:scaleX(1.0702);">Design method</div>
<div class="r" style="left:147.00px;top:1010.30px;width:683.50px;height:32.30px;border:1px solid #8a8a8a;box-sizing:border-box;border-radius:5px;background:#f5f5f5"></div>
<div class="t" style="left:155.00px;top:1017.56px;font-size:18.00px;color:#262626;">FIR least-squares</div>
<svg class="s" style="left:807.50px;top:1022.30px;" width="12.00" height="7.00" viewBox="0 0 12.00 7.00"><path d="M0 0 H12.00 L6.00 7.00 Z" fill="#444"/></svg>
<div class="r" style="left:4px;top:1058.40px;width:835.5px;height:33.00px;border:1px solid #8f8f8f;box-sizing:border-box"></div>
<svg class="s" style="left:10.00px;top:1072.40px;" width="12.00" height="7.00" viewBox="0 0 12.00 7.00"><path d="M0 0 H12.00 L6.00 7.00 Z" fill="#555"/></svg>
<div class="t" style="left:28.07px;top:1067.21px;font-size:17.00px;color:#333;transform:scaleX(1.1018);">Algorithm Options</div>
<div class="t" style="left:17.07px;top:1110.61px;font-size:17.00px;color:#3a3a3a;transform:scaleX(1.0684);">Stopband weight 1</div>
<div class="r" style="left:178.00px;top:1101.30px;width:644.00px;height:32.50px;border:1px solid #8a8a8a;box-sizing:border-box;background:#fff"></div>
<div class="t" style="left:191.00px;top:1110.91px;font-size:17.00px;color:#333;">3</div>
<div class="t" style="left:17.07px;top:1146.61px;font-size:17.00px;color:#3a3a3a;transform:scaleX(1.0393);">Passband weight</div>
<div class="r" style="left:178.00px;top:1137.50px;width:644.00px;height:32.50px;border:1px solid #8a8a8a;box-sizing:border-box;background:#fff"></div>
<div class="t" style="left:191.00px;top:1147.11px;font-size:17.00px;color:#333;">1</div>
<div class="t" style="left:17.07px;top:1182.61px;font-size:17.00px;color:#3a3a3a;transform:scaleX(1.0684);">Stopband weight 2</div>
<div class="r" style="left:178.00px;top:1173.30px;width:644.00px;height:32.50px;border:1px solid #8a8a8a;box-sizing:border-box;background:#fff"></div>
<div class="t" style="left:191.00px;top:1182.91px;font-size:17.00px;color:#333;">5</div>
<div class="r" style="left:0.00px;top:1224.00px;width:873.00px;height:34.00px;background:#fff"></div>
<svg class="s" style="left:15.00px;top:1235.50px;" width="7.00" height="11.00" viewBox="0 0 7.00 11.00"><path d="M0 0 V11 L5.8 5.5 Z" fill="#9a9a9a"/></svg>
<div class="t" style="left:35.90px;top:1231.57px;font-size:20.00px;color:#222;transform:scaleX(0.9743);">Filter Information</div>
<svg class="s" style="left:844.00px;top:1232.00px;" width="6.00" height="18.00" viewBox="0 0 6.00 18.00"><circle cx="3" cy="2.8" r="1.6" fill="#444"/><circle cx="3" cy="9" r="1.6" fill="#444"/><circle cx="3" cy="15.2" r="1.6" fill="#444"/></svg>
<div class="r" style="left:0.00px;top:1258.00px;width:873.00px;height:1.00px;background:#b4b4b4"></div>
<div class="r" style="left:0.00px;top:1259.00px;width:873.00px;height:2.00px;background:#fff"></div>
<div class="r" style="left:872.60px;top:181.50px;width:1.40px;height:1080.50px;background:#ababab"></div>
<div class="r" style="left:874.00px;top:181.50px;width:1.00px;height:1080.50px;background:#f5f5f5"></div>
<div class="r" style="left:875.00px;top:181.50px;width:1082.00px;height:1080.50px;background:#f5f5f5"></div>
<div class="r" style="left:875.00px;top:181.50px;width:1082.00px;height:34.50px;background:#fff"></div>
<div class="r" style="left:875.00px;top:215.00px;width:1082.00px;height:1.30px;background:#d4d4d4"></div>
<svg class="s" style="left:882.00px;top:189.00px;" width="10.00" height="14.00" viewBox="0 0 10.00 14.00"><path d="M1 2 H8 M1 5 H8 M1 8 H8 M1 11 H8" stroke="#8a8a8a" stroke-width="1.2"/></svg>
<div class="r" style="left:899.5px;top:182px;width:210.5px;height:34px;background:#fff;border-left:1px solid #d4d4d4;border-right:1px solid #d4d4d4;box-sizing:border-box"></div>
<div class="r" style="left:899.50px;top:182.00px;width:210.50px;height:4.00px;background:#2d8ae2"></div>
<div class="t" style="left:912.01px;top:192.76px;font-size:18.00px;color:#222;">1 (active): Magnitude</div>
<svg class="s" style="left:1086.00px;top:194.00px;" width="15.00" height="15.00" viewBox="0 0 15.00 15.00"><path d="M1.5 1.5 L13.5 13.5 M13.5 1.5 L1.5 13.5" stroke="#333" stroke-width="1.5"/></svg>
<svg class="s" style="left:1124.00px;top:190.00px;" width="16.00" height="15.00" viewBox="0 0 16.00 15.00"><path d="M8 0.5 V14.5 M0.5 7.5 H15.5" stroke="#9a9a9a" stroke-width="2.4"/></svg>
<svg class="s" style="left:1923.00px;top:189.00px;" width="6.00" height="18.00" viewBox="0 0 6.00 18.00"><circle cx="3" cy="2.8" r="1.6" fill="#444"/><circle cx="3" cy="9" r="1.6" fill="#444"/><circle cx="3" cy="15.2" r="1.6" fill="#444"/></svg>
<div class="r" style="left:1910.00px;top:212.50px;width:46.00px;height:1.00px;background:#d4d4d4"></div>
<div class="r" style="left:882.00px;top:232.70px;width:46.50px;height:1.80px;background:#1f72c0"></div>
<div class="t" style="left:929.93px;top:221.79px;font-size:19.50px;color:#222;transform:scaleX(1.0222);">bandpassfir1</div>
<div class="r" style="left:875.00px;top:250.80px;width:1082.00px;height:1.50px;background:#262626"></div>
<svg class="s" style="left:875.00px;top:252.00px;" width="1082.00" height="1010.00" viewBox="0 0 1082.00 1010.00"><rect x="78.20" y="34.50" width="976.30" height="904.70" fill="#fff"/><path d="M273.46 34.50 V939.20 M468.72 34.50 V939.20 M663.98 34.50 V939.20 M859.24 34.50 V939.20 M78.20 84.30 H1054.50 M78.20 144.23 H1054.50 M78.20 204.16 H1054.50 M78.20 264.09 H1054.50 M78.20 324.02 H1054.50 M78.20 383.95 H1054.50 M78.20 443.88 H1054.50 M78.20 503.81 H1054.50 M78.20 563.74 H1054.50 M78.20 623.67 H1054.50 M78.20 683.60 H1054.50 M78.20 743.53 H1054.50 M78.20 803.46 H1054.50 M78.20 863.39 H1054.50 M78.20 923.32 H1054.50" stroke="#dedede" stroke-width="1.6" fill="none"/><path d="M78.20 939.20 v-9.00 M78.20 34.50 v9.00 M175.83 939.20 v-5.00 M175.83 34.50 v5.00 M273.46 939.20 v-9.00 M273.46 34.50 v9.00 M371.09 939.20 v-5.00 M371.09 34.50 v5.00 M468.72 939.20 v-9.00 M468.72 34.50 v9.00 M566.35 939.20 v-5.00 M566.35 34.50 v5.00 M663.98 939.20 v-9.00 M663.98 34.50 v9.00 M761.61 939.20 v-5.00 M761.61 34.50 v5.00 M859.24 939.20 v-9.00 M859.24 34.50 v9.00 M956.87 939.20 v-5.00 M956.87 34.50 v5.00 M1054.50 939.20 v-9.00 M1054.50 34.50 v9.00 M78.20 54.34 h5.00 M1054.50 54.34 h-5.00 M78.20 84.30 h9.00 M1054.50 84.30 h-9.00 M78.20 114.26 h5.00 M1054.50 114.26 h-5.00 M78.20 144.23 h9.00 M1054.50 144.23 h-9.00 M78.20 174.20 h5.00 M1054.50 174.20 h-5.00 M78.20 204.16 h9.00 M1054.50 204.16 h-9.00 M78.20 234.12 h5.00 M1054.50 234.12 h-5.00 M78.20 264.09 h9.00 M1054.50 264.09 h-9.00 M78.20 294.06 h5.00 M1054.50 294.06 h-5.00 M78.20 324.02 h9.00 M1054.50 324.02 h-9.00 M78.20 353.99 h5.00 M1054.50 353.99 h-5.00 M78.20 383.95 h9.00 M1054.50 383.95 h-9.00 M78.20 413.91 h5.00 M1054.50 413.91 h-5.00 M78.20 443.88 h9.00 M1054.50 443.88 h-9.00 M78.20 473.85 h5.00 M1054.50 473.85 h-5.00 M78.20 503.81 h9.00 M1054.50 503.81 h-9.00 M78.20 533.78 h5.00 M1054.50 533.78 h-5.00 M78.20 563.74 h9.00 M1054.50 563.74 h-9.00 M78.20 593.71 h5.00 M1054.50 593.71 h-5.00 M78.20 623.67 h9.00 M1054.50 623.67 h-9.00 M78.20 653.63 h5.00 M1054.50 653.63 h-5.00 M78.20 683.60 h9.00 M1054.50 683.60 h-9.00 M78.20 713.57 h5.00 M1054.50 713.57 h-5.00 M78.20 743.53 h9.00 M1054.50 743.53 h-9.00 M78.20 773.50 h5.00 M1054.50 773.50 h-5.00 M78.20 803.46 h9.00 M1054.50 803.46 h-9.00 M78.20 833.42 h5.00 M1054.50 833.42 h-5.00 M78.20 863.39 h9.00 M1054.50 863.39 h-9.00 M78.20 893.36 h5.00 M1054.50 893.36 h-5.00 M78.20 923.32 h9.00 M1054.50 923.32 h-9.00" stroke="#1f1f1f" stroke-width="1.4" fill="none"/><rect x="78.20" y="34.50" width="976.30" height="904.70" fill="none" stroke="#1f1f1f" stroke-width="1.4"/><path d="M371.09 84.30 H810.42 M371.09 88.30 V941.20 M419.90 88.30 V941.20 M615.16 88.30 V941.20 M810.42 88.30 V941.20" stroke="#ff4040" stroke-width="1.7" stroke-dasharray="8.5 3.5" fill="none"/><polyline points="78.2,564.5 78.6,564.5 79.0,564.5 79.4,564.6 79.8,564.8 80.2,564.9 80.5,565.1 80.9,565.4 81.3,565.6 81.7,565.9 82.1,566.3 82.5,566.7 82.9,567.1 83.3,567.6 83.7,568.1 84.1,568.6 84.4,569.2 84.8,569.8 85.2,570.4 85.6,571.1 86.0,571.9 86.4,572.7 86.8,573.5 87.2,574.4 87.6,575.3 88.0,576.2 88.4,577.2 88.7,578.3 89.1,579.4 89.5,580.5 89.9,581.7 90.3,583.0 90.7,584.3 91.1,585.6 91.5,587.0 91.9,588.5 92.3,590.0 92.6,591.6 93.0,593.2 93.4,594.9 93.8,596.7 94.2,598.6 94.6,600.5 95.0,602.5 95.4,604.5 95.8,606.7 96.2,608.9 96.6,611.2 96.9,613.6 97.3,616.1 97.7,618.7 98.1,621.4 98.5,624.2 98.9,627.2 99.3,630.2 99.7,633.4 100.1,636.7 100.5,640.2 100.9,643.9 101.2,647.7 101.6,651.7 102.0,655.9 102.4,660.3 102.8,665.0 103.2,669.9 103.6,675.1 104.0,680.6 104.4,686.5 104.8,692.8 105.1,699.5 105.5,706.7 105.9,714.5 106.3,723.0 106.7,732.3 107.1,742.5 107.5,754.0 107.9,766.9 108.3,781.6 108.7,798.9 109.1,819.7 109.4,845.8 109.8,880.8 110.2,934.0 110.6,941.4 110.8,941.4 111.0,941.4 111.4,933.3 111.8,880.2 112.2,845.2 112.6,819.1 113.0,798.2 113.3,780.8 113.7,766.0 114.1,753.0 114.5,741.5 114.9,731.1 115.3,721.7 115.7,713.1 116.1,705.2 116.5,697.9 116.9,691.1 117.3,684.7 117.6,678.7 118.0,673.1 118.4,667.8 118.8,662.8 119.2,658.0 119.6,653.5 120.0,649.2 120.4,645.1 120.8,641.2 121.2,637.4 121.5,633.8 121.9,630.4 122.3,627.1 122.7,623.9 123.1,620.9 123.5,618.0 123.9,615.2 124.3,612.5 124.7,609.9 125.1,607.3 125.5,604.9 125.8,602.6 126.2,600.4 126.6,598.2 127.0,596.1 127.4,594.1 127.8,592.1 128.2,590.3 128.6,588.5 129.0,586.7 129.4,585.0 129.7,583.4 130.1,581.8 130.5,580.3 130.9,578.9 131.3,577.5 131.7,576.1 132.1,574.9 132.5,573.6 132.9,572.4 133.3,571.3 133.7,570.2 134.0,569.1 134.4,568.1 134.8,567.1 135.2,566.2 135.6,565.4 136.0,564.5 136.4,563.7 136.8,563.0 137.2,562.3 137.6,561.6 137.9,561.0 138.3,560.4 138.7,559.8 139.1,559.3 139.5,558.8 139.9,558.4 140.3,558.0 140.7,557.6 141.1,557.3 141.5,557.0 141.9,556.8 142.2,556.6 142.6,556.4 143.0,556.2 143.4,556.1 143.8,556.1 144.2,556.0 144.6,556.0 145.0,556.1 145.4,556.2 145.8,556.3 146.2,556.5 146.5,556.6 146.9,556.9 147.3,557.2 147.7,557.5 148.1,557.8 148.5,558.2 148.9,558.6 149.3,559.1 149.7,559.6 150.1,560.2 150.4,560.7 150.8,561.4 151.2,562.1 151.6,562.8 152.0,563.5 152.4,564.4 152.8,565.2 153.2,566.1 153.6,567.1 154.0,568.1 154.4,569.1 154.7,570.2 155.1,571.4 155.5,572.6 155.9,573.8 156.3,575.1 156.7,576.5 157.1,577.9 157.5,579.4 157.9,581.0 158.3,582.6 158.6,584.3 159.0,586.1 159.4,587.9 159.8,589.8 160.2,591.8 160.6,593.9 161.0,596.0 161.4,598.3 161.8,600.6 162.2,603.1 162.6,605.6 162.9,608.3 163.3,611.0 163.7,613.9 164.1,616.9 164.5,620.1 164.9,623.4 165.3,626.9 165.7,630.5 166.1,634.3 166.5,638.3 166.8,642.5 167.2,647.0 167.6,651.7 168.0,656.6 168.4,661.9 168.8,667.5 169.2,673.5 169.6,679.9 170.0,686.8 170.4,694.2 170.8,702.3 171.1,711.2 171.5,720.9 171.9,731.7 172.3,743.8 172.7,757.6 173.1,773.6 173.5,792.7 173.9,816.1 174.3,846.6 174.7,890.1 175.0,941.4 175.4,941.4 175.4,941.4 175.8,941.4 176.2,880.9 176.6,840.0 177.0,810.6 177.4,787.7 177.8,768.9 178.2,753.0 178.6,739.2 179.0,727.0 179.3,716.1 179.7,706.2 180.1,697.2 180.5,688.9 180.9,681.3 181.3,674.1 181.7,667.5 182.1,661.3 182.5,655.4 182.9,649.9 183.2,644.6 183.6,639.7 184.0,635.0 184.4,630.5 184.8,626.2 185.2,622.1 185.6,618.2 186.0,614.5 186.4,610.9 186.8,607.4 187.2,604.1 187.5,601.0 187.9,597.9 188.3,595.0 188.7,592.1 189.1,589.4 189.5,586.8 189.9,584.2 190.3,581.8 190.7,579.4 191.1,577.2 191.5,575.0 191.8,572.8 192.2,570.8 192.6,568.8 193.0,566.9 193.4,565.1 193.8,563.3 194.2,561.6 194.6,559.9 195.0,558.3 195.4,556.7 195.7,555.3 196.1,553.8 196.5,552.4 196.9,551.1 197.3,549.8 197.7,548.6 198.1,547.4 198.5,546.3 198.9,545.2 199.3,544.2 199.7,543.2 200.0,542.2 200.4,541.3 200.8,540.4 201.2,539.6 201.6,538.8 202.0,538.1 202.4,537.4 202.8,536.7 203.2,536.1 203.6,535.5 203.9,535.0 204.3,534.5 204.7,534.1 205.1,533.6 205.5,533.3 205.9,532.9 206.3,532.6 206.7,532.4 207.1,532.1 207.5,532.0 207.9,531.8 208.2,531.7 208.6,531.6 209.0,531.6 209.4,531.6 209.8,531.7 210.2,531.8 210.6,531.9 211.0,532.1 211.4,532.3 211.8,532.5 212.1,532.8 212.5,533.2 212.9,533.5 213.3,534.0 213.7,534.4 214.1,534.9 214.5,535.5 214.9,536.1 215.3,536.7 215.7,537.4 216.1,538.2 216.4,539.0 216.8,539.8 217.2,540.7 217.6,541.6 218.0,542.6 218.4,543.7 218.8,544.8 219.2,545.9 219.6,547.1 220.0,548.4 220.3,549.8 220.7,551.2 221.1,552.6 221.5,554.2 221.9,555.8 222.3,557.5 222.7,559.2 223.1,561.1 223.5,563.0 223.9,565.0 224.3,567.1 224.6,569.3 225.0,571.6 225.4,574.0 225.8,576.5 226.2,579.1 226.6,581.9 227.0,584.8 227.4,587.8 227.8,590.9 228.2,594.2 228.6,597.7 228.9,601.4 229.3,605.2 229.7,609.3 230.1,613.6 230.5,618.1 230.9,622.9 231.3,628.0 231.7,633.5 232.1,639.3 232.5,645.6 232.8,652.3 233.2,659.5 233.6,667.4 234.0,676.0 234.4,685.5 234.8,696.1 235.2,707.9 235.6,721.4 236.0,737.0 236.4,755.5 236.8,778.3 237.1,807.6 237.5,849.0 237.9,919.2 238.3,941.4 238.3,941.4 238.7,925.4 239.1,851.3 239.5,808.3 239.9,777.8 240.3,754.2 240.7,734.9 241.0,718.6 241.4,704.5 241.8,692.0 242.2,680.9 242.6,670.8 243.0,661.6 243.4,653.1 243.8,645.3 244.2,638.0 244.6,631.2 245.0,624.9 245.3,618.9 245.7,613.2 246.1,607.9 246.5,602.8 246.9,597.9 247.3,593.3 247.7,588.9 248.1,584.7 248.5,580.7 248.9,576.9 249.2,573.2 249.6,569.6 250.0,566.2 250.4,563.0 250.8,559.8 251.2,556.8 251.6,553.9 252.0,551.0 252.4,548.3 252.8,545.7 253.2,543.2 253.5,540.7 253.9,538.4 254.3,536.1 254.7,533.9 255.1,531.7 255.5,529.7 255.9,527.7 256.3,525.8 256.7,523.9 257.1,522.1 257.4,520.4 257.8,518.7 258.2,517.1 258.6,515.6 259.0,514.1 259.4,512.6 259.8,511.3 260.2,509.9 260.6,508.6 261.0,507.4 261.4,506.2 261.7,505.1 262.1,504.0 262.5,502.9 262.9,501.9 263.3,501.0 263.7,500.1 264.1,499.2 264.5,498.4 264.9,497.6 265.3,496.9 265.6,496.2 266.0,495.6 266.4,495.0 266.8,494.4 267.2,493.9 267.6,493.5 268.0,493.0 268.4,492.7 268.8,492.3 269.2,492.0 269.6,491.8 269.9,491.5 270.3,491.4 270.7,491.2 271.1,491.2 271.5,491.1 271.9,491.1 272.3,491.2 272.7,491.2 273.1,491.4 273.5,491.6 273.9,491.8 274.2,492.1 274.6,492.4 275.0,492.7 275.4,493.2 275.8,493.6 276.2,494.1 276.6,494.7 277.0,495.3 277.4,496.0 277.8,496.7 278.1,497.5 278.5,498.3 278.9,499.2 279.3,500.2 279.7,501.2 280.1,502.3 280.5,503.4 280.9,504.6 281.3,505.9 281.7,507.2 282.1,508.6 282.4,510.1 282.8,511.7 283.2,513.4 283.6,515.1 284.0,517.0 284.4,518.9 284.8,520.9 285.2,523.0 285.6,525.3 286.0,527.6 286.3,530.1 286.7,532.7 287.1,535.4 287.5,538.3 287.9,541.3 288.3,544.5 288.7,547.8 289.1,551.4 289.5,555.1 289.9,559.1 290.3,563.3 290.6,567.8 291.0,572.5 291.4,577.6 291.8,583.0 292.2,588.8 292.6,595.1 293.0,601.9 293.4,609.2 293.8,617.2 294.2,626.1 294.5,635.9 294.9,646.8 295.3,659.2 295.7,673.5 296.1,690.2 296.5,710.4 296.9,735.8 297.3,769.8 297.7,821.3 298.1,929.6 298.3,941.4 298.5,941.4 298.8,825.9 299.2,771.1 299.6,735.2 300.0,708.3 300.4,686.9 300.8,669.0 301.2,653.6 301.6,640.2 302.0,628.2 302.4,617.5 302.7,607.7 303.1,598.7 303.5,590.4 303.9,582.6 304.3,575.4 304.7,568.7 305.1,562.3 305.5,556.3 305.9,550.7 306.3,545.3 306.7,540.2 307.0,535.3 307.4,530.6 307.8,526.2 308.2,521.9 308.6,517.9 309.0,513.9 309.4,510.2 309.8,506.5 310.2,503.1 310.6,499.7 310.9,496.5 311.3,493.4 311.7,490.3 312.1,487.4 312.5,484.6 312.9,481.9 313.3,479.3 313.7,476.8 314.1,474.3 314.5,472.0 314.9,469.7 315.2,467.5 315.6,465.4 316.0,463.3 316.4,461.3 316.8,459.4 317.2,457.5 317.6,455.7 318.0,454.0 318.4,452.3 318.8,450.7 319.2,449.2 319.5,447.7 319.9,446.2 320.3,444.9 320.7,443.5 321.1,442.3 321.5,441.1 321.9,439.9 322.3,438.8 322.7,437.8 323.1,436.8 323.4,435.8 323.8,434.9 324.2,434.1 324.6,433.3 325.0,432.5 325.4,431.8 325.8,431.2 326.2,430.6 326.6,430.1 327.0,429.6 327.4,429.2 327.7,428.8 328.1,428.5 328.5,428.2 328.9,428.0 329.3,427.8 329.7,427.7 330.1,427.7 330.5,427.7 330.9,427.8 331.3,427.9 331.6,428.1 332.0,428.4 332.4,428.7 332.8,429.1 333.2,429.6 333.6,430.1 334.0,430.7 334.4,431.4 334.8,432.1 335.2,432.9 335.6,433.8 335.9,434.8 336.3,435.9 336.7,437.1 337.1,438.4 337.5,439.8 337.9,441.2 338.3,442.8 338.7,444.6 339.1,446.4 339.5,448.4 339.8,450.5 340.2,452.7 340.6,455.1 341.0,457.7 341.4,460.5 341.8,463.5 342.2,466.6 342.6,470.0 343.0,473.7 343.4,477.6 343.8,481.9 344.1,486.5 344.5,491.4 344.9,496.8 345.3,502.7 345.7,509.1 346.1,516.2 346.5,524.1 346.9,532.8 347.3,542.6 347.7,553.8 348.0,566.7 348.4,581.9 348.8,600.2 349.2,623.0 349.6,653.2 350.0,697.2 350.4,777.9 350.7,941.4 350.8,941.4 351.2,740.9 351.6,675.1 352.0,634.4 352.3,604.6 352.7,581.0 353.1,561.4 353.5,544.6 353.9,529.9 354.3,516.7 354.7,504.8 355.1,493.9 355.5,483.8 355.9,474.5 356.3,465.8 356.6,457.6 357.0,449.9 357.4,442.5 357.8,435.6 358.2,428.9 358.6,422.6 359.0,416.5 359.4,410.7 359.8,405.1 360.2,399.7 360.5,394.4 360.9,389.4 361.3,384.5 361.7,379.8 362.1,375.2 362.5,370.7 362.9,366.3 363.3,362.1 363.7,358.0 364.1,354.0 364.5,350.0 364.8,346.2 365.2,342.5 365.6,338.8 366.0,335.2 366.4,331.7 366.8,328.3 367.2,324.9 367.6,321.6 368.0,318.4 368.4,315.2 368.7,312.1 369.1,309.0 369.5,306.0 369.9,303.0 370.3,300.1 370.7,297.3 371.1,294.4 371.5,291.7 371.9,289.0 372.3,286.3 372.7,283.6 373.0,281.0 373.4,278.5 373.8,276.0 374.2,273.5 374.6,271.0 375.0,268.6 375.4,266.2 375.8,263.9 376.2,261.6 376.6,259.3 376.9,257.0 377.3,254.8 377.7,252.6 378.1,250.4 378.5,248.3 378.9,246.2 379.3,244.1 379.7,242.0 380.1,240.0 380.5,238.0 380.9,236.0 381.2,234.0 381.6,232.1 382.0,230.1 382.4,228.2 382.8,226.4 383.2,224.5 383.6,222.7 384.0,220.9 384.4,219.1 384.8,217.3 385.1,215.6 385.5,213.8 385.9,212.1 386.3,210.4 386.7,208.7 387.1,207.1 387.5,205.4 387.9,203.8 388.3,202.2 388.7,200.6 389.1,199.0 389.4,197.5 389.8,196.0 390.2,194.4 390.6,192.9 391.0,191.4 391.4,190.0 391.8,188.5 392.2,187.0 392.6,185.6 393.0,184.2 393.3,182.8 393.7,181.4 394.1,180.0 394.5,178.7 394.9,177.3 395.3,176.0 395.7,174.7 396.1,173.4 396.5,172.1 396.9,170.8 397.3,169.5 397.6,168.3 398.0,167.0 398.4,165.8 398.8,164.6 399.2,163.4 399.6,162.2 400.0,161.0 400.4,159.8 400.8,158.7 401.2,157.5 401.6,156.4 401.9,155.3 402.3,154.2 402.7,153.1 403.1,152.0 403.5,150.9 403.9,149.8 404.3,148.8 404.7,147.7 405.1,146.7 405.5,145.7 405.8,144.6 406.2,143.6 406.6,142.6 407.0,141.7 407.4,140.7 407.8,139.7 408.2,138.8 408.6,137.8 409.0,136.9 409.4,135.9 409.8,135.0 410.1,134.1 410.5,133.2 410.9,132.3 411.3,131.5 411.7,130.6 412.1,129.7 412.5,128.9 412.9,128.0 413.3,127.2 413.7,126.4 414.0,125.5 414.4,124.7 414.8,123.9 415.2,123.1 415.6,122.4 416.0,121.6 416.4,120.8 416.8,120.1 417.2,119.3 417.6,118.6 418.0,117.8 418.3,117.1 418.7,116.4 419.1,115.7 419.5,115.0 419.9,114.3 420.3,113.6 420.7,112.9 421.1,112.3 421.5,111.6 421.9,110.9 422.2,110.3 422.6,109.7 423.0,109.0 423.4,108.4 423.8,107.8 424.2,107.2 424.6,106.6 425.0,106.0 425.4,105.4 425.8,104.8 426.2,104.2 426.5,103.7 426.9,103.1 427.3,102.6 427.7,102.0 428.1,101.5 428.5,100.9 428.9,100.4 429.3,99.9 429.7,99.4 430.1,98.9 430.4,98.4 430.8,97.9 431.2,97.4 431.6,96.9 432.0,96.5 432.4,96.0 432.8,95.6 433.2,95.1 433.6,94.7 434.0,94.2 434.4,93.8 434.7,93.4 435.1,92.9 435.5,92.5 435.9,92.1 436.3,91.7 436.7,91.3 437.1,90.9 437.5,90.6 437.9,90.2 438.3,89.8 438.6,89.5 439.0,89.1 439.4,88.7 439.8,88.4 440.2,88.1 440.6,87.7 441.0,87.4 441.4,87.1 441.8,86.8 442.2,86.5 442.6,86.1 442.9,85.8 443.3,85.6 443.7,85.3 444.1,85.0 444.5,84.7 444.9,84.4 445.3,84.2 445.7,83.9 446.1,83.7 446.5,83.4 446.9,83.2 447.2,82.9 447.6,82.7 448.0,82.5 448.4,82.2 448.8,82.0 449.2,81.8 449.6,81.6 450.0,81.4 450.4,81.2 450.8,81.0 451.1,80.8 451.5,80.6 451.9,80.5 452.3,80.3 452.7,80.1 453.1,79.9 453.5,79.8 453.9,79.6 454.3,79.5 454.7,79.3 455.1,79.2 455.4,79.1 455.8,78.9 456.2,78.8 456.6,78.7 457.0,78.6 457.4,78.5 457.8,78.4 458.2,78.2 458.6,78.2 459.0,78.1 459.3,78.0 459.7,77.9 460.1,77.8 460.5,77.7 460.9,77.6 461.3,77.6 461.7,77.5 462.1,77.4 462.5,77.4 462.9,77.3 463.3,77.3 463.6,77.2 464.0,77.2 464.4,77.2 464.8,77.1 465.2,77.1 465.6,77.1 466.0,77.1 466.4,77.0 466.8,77.0 467.2,77.0 467.5,77.0 467.9,77.0 468.3,77.0 468.7,77.0 469.1,77.0 469.5,77.0 469.9,77.0 470.3,77.0 470.7,77.0 471.1,77.1 471.5,77.1 471.8,77.1 472.2,77.2 472.6,77.2 473.0,77.2 473.4,77.3 473.8,77.3 474.2,77.4 474.6,77.4 475.0,77.4 475.4,77.5 475.7,77.6 476.1,77.6 476.5,77.7 476.9,77.7 477.3,77.8 477.7,77.9 478.1,77.9 478.5,78.0 478.9,78.1 479.3,78.2 479.7,78.3 480.0,78.3 480.4,78.4 480.8,78.5 481.2,78.6 481.6,78.7 482.0,78.8 482.4,78.9 482.8,79.0 483.2,79.1 483.6,79.2 484.0,79.3 484.3,79.4 484.7,79.5 485.1,79.6 485.5,79.7 485.9,79.8 486.3,79.9 486.7,80.0 487.1,80.1 487.5,80.2 487.9,80.4 488.2,80.5 488.6,80.6 489.0,80.7 489.4,80.8 489.8,80.9 490.2,81.1 490.6,81.2 491.0,81.3 491.4,81.4 491.8,81.6 492.2,81.7 492.5,81.8 492.9,81.9 493.3,82.1 493.7,82.2 494.1,82.3 494.5,82.4 494.9,82.6 495.3,82.7 495.7,82.8 496.1,82.9 496.4,83.1 496.8,83.2 497.2,83.3 497.6,83.4 498.0,83.6 498.4,83.7 498.8,83.8 499.2,83.9 499.6,84.1 500.0,84.2 500.4,84.3 500.7,84.4 501.1,84.6 501.5,84.7 501.9,84.8 502.3,84.9 502.7,85.0 503.1,85.2 503.5,85.3 503.9,85.4 504.3,85.5 504.6,85.6 505.0,85.7 505.4,85.9 505.8,86.0 506.2,86.1 506.6,86.2 507.0,86.3 507.4,86.4 507.8,86.5 508.2,86.6 508.6,86.7 508.9,86.8 509.3,86.9 509.7,87.0 510.1,87.1 510.5,87.2 510.9,87.3 511.3,87.4 511.7,87.5 512.1,87.6 512.5,87.6 512.8,87.7 513.2,87.8 513.6,87.9 514.0,88.0 514.4,88.0 514.8,88.1 515.2,88.2 515.6,88.2 516.0,88.3 516.4,88.4 516.8,88.4 517.1,88.5 517.5,88.6 517.9,88.6 518.3,88.7 518.7,88.7 519.1,88.8 519.5,88.8 519.9,88.9 520.3,88.9 520.7,88.9 521.0,89.0 521.4,89.0 521.8,89.0 522.2,89.1 522.6,89.1 523.0,89.1 523.4,89.2 523.8,89.2 524.2,89.2 524.6,89.2 525.0,89.2 525.3,89.2 525.7,89.2 526.1,89.2 526.5,89.2 526.9,89.3 527.3,89.2 527.7,89.2 528.1,89.2 528.5,89.2 528.9,89.2 529.3,89.2 529.6,89.2 530.0,89.2 530.4,89.2 530.8,89.1 531.2,89.1 531.6,89.1 532.0,89.1 532.4,89.0 532.8,89.0 533.2,89.0 533.5,88.9 533.9,88.9 534.3,88.8 534.7,88.8 535.1,88.7 535.5,88.7 535.9,88.6 536.3,88.6 536.7,88.5 537.1,88.5 537.5,88.4 537.8,88.4 538.2,88.3 538.6,88.2 539.0,88.2 539.4,88.1 539.8,88.0 540.2,88.0 540.6,87.9 541.0,87.8 541.4,87.7 541.7,87.7 542.1,87.6 542.5,87.5 542.9,87.4 543.3,87.4 543.7,87.3 544.1,87.2 544.5,87.1 544.9,87.0 545.3,86.9 545.7,86.8 546.0,86.7 546.4,86.6 546.8,86.6 547.2,86.5 547.6,86.4 548.0,86.3 548.4,86.2 548.8,86.1 549.2,86.0 549.6,85.9 549.9,85.8 550.3,85.7 550.7,85.6 551.1,85.5 551.5,85.4 551.9,85.3 552.3,85.2 552.7,85.1 553.1,85.0 553.5,84.9 553.9,84.8 554.2,84.7 554.6,84.6 555.0,84.5 555.4,84.4 555.8,84.3 556.2,84.2 556.6,84.1 557.0,84.0 557.4,83.9 557.8,83.8 558.1,83.7 558.5,83.6 558.9,83.5 559.3,83.4 559.7,83.3 560.1,83.2 560.5,83.1 560.9,83.0 561.3,82.9 561.7,82.8 562.1,82.7 562.4,82.6 562.8,82.5 563.2,82.4 563.6,82.4 564.0,82.3 564.4,82.2 564.8,82.1 565.2,82.0 565.6,81.9 566.0,81.8 566.3,81.8 566.7,81.7 567.1,81.6 567.5,81.5 567.9,81.5 568.3,81.4 568.7,81.3 569.1,81.2 569.5,81.2 569.9,81.1 570.3,81.1 570.6,81.0 571.0,80.9 571.4,80.9 571.8,80.8 572.2,80.8 572.6,80.7 573.0,80.7 573.4,80.6 573.8,80.6 574.2,80.5 574.6,80.5 574.9,80.4 575.3,80.4 575.7,80.4 576.1,80.3 576.5,80.3 576.9,80.3 577.3,80.3 577.7,80.2 578.1,80.2 578.5,80.2 578.8,80.2 579.2,80.2 579.6,80.2 580.0,80.2 580.4,80.2 580.8,80.2 581.2,80.2 581.6,80.2 582.0,80.2 582.4,80.2 582.8,80.2 583.1,80.2 583.5,80.2 583.9,80.2 584.3,80.3 584.7,80.3 585.1,80.3 585.5,80.4 585.9,80.4 586.3,80.4 586.7,80.5 587.0,80.5 587.4,80.6 587.8,80.6 588.2,80.7 588.6,80.7 589.0,80.8 589.4,80.9 589.8,80.9 590.2,81.0 590.6,81.1 591.0,81.2 591.3,81.2 591.7,81.3 592.1,81.4 592.5,81.5 592.9,81.6 593.3,81.7 593.7,81.8 594.1,81.9 594.5,82.0 594.9,82.1 595.2,82.2 595.6,82.4 596.0,82.5 596.4,82.6 596.8,82.7 597.2,82.9 597.6,83.0 598.0,83.2 598.4,83.3 598.8,83.4 599.2,83.6 599.5,83.7 599.9,83.9 600.3,84.1 600.7,84.2 601.1,84.4 601.5,84.6 601.9,84.8 602.3,84.9 602.7,85.1 603.1,85.3 603.4,85.5 603.8,85.7 604.2,85.9 604.6,86.1 605.0,86.3 605.4,86.5 605.8,86.7 606.2,86.9 606.6,87.2 607.0,87.4 607.4,87.6 607.7,87.8 608.1,88.1 608.5,88.3 608.9,88.6 609.3,88.8 609.7,89.1 610.1,89.3 610.5,89.6 610.9,89.8 611.3,90.1 611.7,90.4 612.0,90.6 612.4,90.9 612.8,91.2 613.2,91.5 613.6,91.8 614.0,92.0 614.4,92.3 614.8,92.6 615.2,92.9 615.6,93.2 615.9,93.5 616.3,93.9 616.7,94.2 617.1,94.5 617.5,94.8 617.9,95.1 618.3,95.5 618.7,95.8 619.1,96.1 619.5,96.5 619.9,96.8 620.2,97.1 620.6,97.5 621.0,97.8 621.4,98.2 621.8,98.6 622.2,98.9 622.6,99.3 623.0,99.7 623.4,100.0 623.8,100.4 624.1,100.8 624.5,101.2 624.9,101.5 625.3,101.9 625.7,102.3 626.1,102.7 626.5,103.1 626.9,103.5 627.3,103.9 627.7,104.3 628.1,104.7 628.4,105.1 628.8,105.5 629.2,106.0 629.6,106.4 630.0,106.8 630.4,107.2 630.8,107.6 631.2,108.1 631.6,108.5 632.0,108.9 632.3,109.4 632.7,109.8 633.1,110.3 633.5,110.7 633.9,111.1 634.3,111.6 634.7,112.0 635.1,112.5 635.5,112.9 635.9,113.4 636.3,113.9 636.6,114.3 637.0,114.8 637.4,115.2 637.8,115.7 638.2,116.2 638.6,116.7 639.0,117.1 639.4,117.6 639.8,118.1 640.2,118.6 640.5,119.0 640.9,119.5 641.3,120.0 641.7,120.5 642.1,121.0 642.5,121.4 642.9,121.9 643.3,122.4 643.7,122.9 644.1,123.4 644.5,123.9 644.8,124.4 645.2,124.9 645.6,125.4 646.0,125.9 646.4,126.3 646.8,126.8 647.2,127.3 647.6,127.8 648.0,128.3 648.4,128.8 648.7,129.3 649.1,129.8 649.5,130.3 649.9,130.8 650.3,131.3 650.7,131.8 651.1,132.3 651.5,132.8 651.9,133.3 652.3,133.8 652.7,134.3 653.0,134.8 653.4,135.3 653.8,135.8 654.2,136.3 654.6,136.8 655.0,137.3 655.4,137.8 655.8,138.2 656.2,138.7 656.6,139.2 657.0,139.7 657.3,140.2 657.7,140.7 658.1,141.2 658.5,141.6 658.9,142.1 659.3,142.6 659.7,143.1 660.1,143.6 660.5,144.0 660.9,144.5 661.2,145.0 661.6,145.4 662.0,145.9 662.4,146.4 662.8,146.8 663.2,147.3 663.6,147.7 664.0,148.2 664.4,148.7 664.8,149.1 665.2,149.5 665.5,150.0 665.9,150.4 666.3,150.9 666.7,151.3 667.1,151.7 667.5,152.2 667.9,152.6 668.3,153.0 668.7,153.4 669.1,153.9 669.4,154.3 669.8,154.7 670.2,155.1 670.6,155.5 671.0,155.9 671.4,156.3 671.8,156.7 672.2,157.1 672.6,157.5 673.0,157.9 673.4,158.2 673.7,158.6 674.1,159.0 674.5,159.4 674.9,159.7 675.3,160.1 675.7,160.5 676.1,160.8 676.5,161.2 676.9,161.5 677.3,161.9 677.6,162.2 678.0,162.5 678.4,162.9 678.8,163.2 679.2,163.5 679.6,163.8 680.0,164.1 680.4,164.5 680.8,164.8 681.2,165.1 681.6,165.4 681.9,165.7 682.3,166.0 682.7,166.2 683.1,166.5 683.5,166.8 683.9,167.1 684.3,167.4 684.7,167.6 685.1,167.9 685.5,168.1 685.8,168.4 686.2,168.7 686.6,168.9 687.0,169.1 687.4,169.4 687.8,169.6 688.2,169.9 688.6,170.1 689.0,170.3 689.4,170.5 689.8,170.8 690.1,171.0 690.5,171.2 690.9,171.4 691.3,171.6 691.7,171.8 692.1,172.0 692.5,172.2 692.9,172.4 693.3,172.6 693.7,172.8 694.1,173.0 694.4,173.1 694.8,173.3 695.2,173.5 695.6,173.7 696.0,173.8 696.4,174.0 696.8,174.2 697.2,174.3 697.6,174.5 698.0,174.7 698.3,174.8 698.7,175.0 699.1,175.1 699.5,175.3 699.9,175.4 700.3,175.6 700.7,175.7 701.1,175.9 701.5,176.0 701.9,176.1 702.3,176.3 702.6,176.4 703.0,176.5 703.4,176.7 703.8,176.8 704.2,176.9 704.6,177.1 705.0,177.2 705.4,177.3 705.8,177.5 706.2,177.6 706.5,177.7 706.9,177.9 707.3,178.0 707.7,178.1 708.1,178.2 708.5,178.4 708.9,178.5 709.3,178.6 709.7,178.7 710.1,178.9 710.5,179.0 710.8,179.1 711.2,179.3 711.6,179.4 712.0,179.5 712.4,179.6 712.8,179.8 713.2,179.9 713.6,180.0 714.0,180.2 714.4,180.3 714.7,180.5 715.1,180.6 715.5,180.7 715.9,180.9 716.3,181.0 716.7,181.2 717.1,181.3 717.5,181.5 717.9,181.6 718.3,181.8 718.7,181.9 719.0,182.1 719.4,182.2 719.8,182.4 720.2,182.6 720.6,182.7 721.0,182.9 721.4,183.1 721.8,183.2 722.2,183.4 722.6,183.6 722.9,183.8 723.3,184.0 723.7,184.2 724.1,184.4 724.5,184.6 724.9,184.8 725.3,185.0 725.7,185.2 726.1,185.4 726.5,185.6 726.9,185.8 727.2,186.0 727.6,186.3 728.0,186.5 728.4,186.7 728.8,187.0 729.2,187.2 729.6,187.5 730.0,187.7 730.4,188.0 730.8,188.2 731.1,188.5 731.5,188.8 731.9,189.0 732.3,189.3 732.7,189.6 733.1,189.9 733.5,190.2 733.9,190.5 734.3,190.8 734.7,191.1 735.1,191.4 735.4,191.7 735.8,192.1 736.2,192.4 736.6,192.7 737.0,193.1 737.4,193.4 737.8,193.8 738.2,194.1 738.6,194.5 739.0,194.9 739.4,195.2 739.7,195.6 740.1,196.0 740.5,196.4 740.9,196.8 741.3,197.2 741.7,197.6 742.1,198.1 742.5,198.5 742.9,198.9 743.3,199.4 743.6,199.8 744.0,200.3 744.4,200.7 744.8,201.2 745.2,201.7 745.6,202.2 746.0,202.6 746.4,203.1 746.8,203.6 747.2,204.2 747.6,204.7 747.9,205.2 748.3,205.7 748.7,206.3 749.1,206.8 749.5,207.4 749.9,207.9 750.3,208.5 750.7,209.1 751.1,209.7 751.5,210.3 751.8,210.9 752.2,211.5 752.6,212.1 753.0,212.7 753.4,213.4 753.8,214.0 754.2,214.7 754.6,215.3 755.0,216.0 755.4,216.7 755.8,217.3 756.1,218.0 756.5,218.7 756.9,219.5 757.3,220.2 757.7,220.9 758.1,221.7 758.5,222.4 758.9,223.2 759.3,223.9 759.7,224.7 760.0,225.5 760.4,226.3 760.8,227.1 761.2,227.9 761.6,228.7 762.0,229.6 762.4,230.4 762.8,231.3 763.2,232.1 763.6,233.0 764.0,233.9 764.3,234.8 764.7,235.7 765.1,236.6 765.5,237.6 765.9,238.5 766.3,239.5 766.7,240.4 767.1,241.4 767.5,242.4 767.9,243.4 768.2,244.4 768.6,245.4 769.0,246.4 769.4,247.5 769.8,248.5 770.2,249.6 770.6,250.7 771.0,251.8 771.4,252.9 771.8,254.0 772.2,255.1 772.5,256.2 772.9,257.4 773.3,258.6 773.7,259.7 774.1,260.9 774.5,262.1 774.9,263.4 775.3,264.6 775.7,265.8 776.1,267.1 776.4,268.4 776.8,269.7 777.2,271.0 777.6,272.3 778.0,273.6 778.4,275.0 778.8,276.3 779.2,277.7 779.6,279.1 780.0,280.5 780.4,281.9 780.7,283.4 781.1,284.8 781.5,286.3 781.9,287.8 782.3,289.3 782.7,290.8 783.1,292.4 783.5,293.9 783.9,295.5 784.3,297.1 784.7,298.7 785.0,300.4 785.4,302.0 785.8,303.7 786.2,305.4 786.6,307.1 787.0,308.8 787.4,310.6 787.8,312.3 788.2,314.1 788.6,316.0 788.9,317.8 789.3,319.6 789.7,321.5 790.1,323.4 790.5,325.4 790.9,327.3 791.3,329.3 791.7,331.3 792.1,333.3 792.5,335.4 792.9,337.4 793.2,339.5 793.6,341.7 794.0,343.8 794.4,346.0 794.8,348.2 795.2,350.5 795.6,352.8 796.0,355.1 796.4,357.4 796.8,359.8 797.1,362.2 797.5,364.6 797.9,367.1 798.3,369.6 798.7,372.2 799.1,374.8 799.5,377.4 799.9,380.0 800.3,382.8 800.7,385.5 801.1,388.3 801.4,391.1 801.8,394.0 802.2,397.0 802.6,399.9 803.0,403.0 803.4,406.1 803.8,409.2 804.2,412.4 804.6,415.7 805.0,419.0 805.3,422.4 805.7,425.8 806.1,429.3 806.5,432.9 806.9,436.6 807.3,440.3 807.7,444.2 808.1,448.1 808.5,452.1 808.9,456.2 809.3,460.4 809.6,464.7 810.0,469.1 810.4,473.7 810.8,478.3 811.2,483.1 811.6,488.1 812.0,493.2 812.4,498.4 812.8,503.9 813.2,509.5 813.5,515.4 813.9,521.5 814.3,527.8 814.7,534.4 815.1,541.3 815.5,548.5 815.9,556.1 816.3,564.1 816.7,572.6 817.1,581.6 817.5,591.3 817.8,601.7 818.2,613.0 818.6,625.3 819.0,638.9 819.4,654.2 819.8,671.6 820.2,691.8 820.6,716.3 821.0,747.4 821.4,790.4 821.8,861.9 822.1,941.4 822.2,941.4 822.5,873.9 822.9,801.0 823.3,759.6 823.7,730.9 824.1,709.1 824.5,691.6 824.9,677.1 825.3,664.8 825.7,654.2 826.0,644.9 826.4,636.6 826.8,629.3 827.2,622.7 827.6,616.7 828.0,611.3 828.4,606.4 828.8,601.9 829.2,597.8 829.6,594.1 830.0,590.7 830.3,587.5 830.7,584.6 831.1,582.0 831.5,579.5 831.9,577.3 832.3,575.3 832.7,573.4 833.1,571.7 833.5,570.2 833.9,568.8 834.2,567.6 834.6,566.5 835.0,565.5 835.4,564.7 835.8,564.0 836.2,563.4 836.6,562.9 837.0,562.5 837.4,562.2 837.8,562.0 838.2,562.0 838.5,562.0 838.9,562.1 839.3,562.3 839.7,562.6 840.1,563.0 840.5,563.5 840.9,564.1 841.3,564.8 841.7,565.5 842.1,566.4 842.4,567.3 842.8,568.4 843.2,569.5 843.6,570.7 844.0,572.0 844.4,573.4 844.8,574.9 845.2,576.5 845.6,578.2 846.0,579.9 846.4,581.8 846.7,583.8 847.1,585.9 847.5,588.1 847.9,590.4 848.3,592.9 848.7,595.4 849.1,598.1 849.5,600.9 849.9,603.9 850.3,607.0 850.6,610.3 851.0,613.7 851.4,617.3 851.8,621.1 852.2,625.0 852.6,629.2 853.0,633.6 853.4,638.3 853.8,643.2 854.2,648.4 854.6,653.9 854.9,659.8 855.3,666.0 855.7,672.8 856.1,680.0 856.5,687.7 856.9,696.2 857.3,705.3 857.7,715.4 858.1,726.6 858.5,739.2 858.8,753.5 859.2,770.1 859.6,789.7 860.0,813.9 860.4,845.4 860.8,890.6 861.2,941.4 861.5,941.4 861.6,941.4 862.0,941.1 862.4,876.1 862.8,836.7 863.1,808.3 863.5,786.2 863.9,768.1 864.3,752.8 864.7,739.6 865.1,728.0 865.5,717.6 865.9,708.3 866.3,699.9 866.7,692.2 867.1,685.1 867.4,678.5 867.8,672.5 868.2,666.8 868.6,661.6 869.0,656.6 869.4,652.0 869.8,647.6 870.2,643.5 870.6,639.7 871.0,636.0 871.3,632.6 871.7,629.3 872.1,626.2 872.5,623.3 872.9,620.5 873.3,617.8 873.7,615.3 874.1,613.0 874.5,610.7 874.9,608.6 875.3,606.6 875.6,604.7 876.0,602.9 876.4,601.1 876.8,599.5 877.2,598.0 877.6,596.6 878.0,595.2 878.4,593.9 878.8,592.7 879.2,591.6 879.5,590.6 879.9,589.6 880.3,588.7 880.7,587.9 881.1,587.2 881.5,586.5 881.9,585.9 882.3,585.3 882.7,584.8 883.1,584.4 883.5,584.0 883.8,583.7 884.2,583.5 884.6,583.3 885.0,583.2 885.4,583.1 885.8,583.1 886.2,583.2 886.6,583.3 887.0,583.4 887.4,583.7 887.7,584.0 888.1,584.3 888.5,584.7 888.9,585.2 889.3,585.7 889.7,586.3 890.1,586.9 890.5,587.6 890.9,588.4 891.3,589.2 891.7,590.1 892.0,591.0 892.4,592.1 892.8,593.1 893.2,594.3 893.6,595.5 894.0,596.8 894.4,598.1 894.8,599.5 895.2,601.0 895.6,602.6 895.9,604.3 896.3,606.0 896.7,607.8 897.1,609.7 897.5,611.7 897.9,613.7 898.3,615.9 898.7,618.2 899.1,620.5 899.5,623.0 899.9,625.6 900.2,628.3 900.6,631.1 901.0,634.0 901.4,637.1 901.8,640.3 902.2,643.7 902.6,647.3 903.0,651.0 903.4,654.9 903.8,659.0 904.1,663.3 904.5,667.9 904.9,672.7 905.3,677.8 905.7,683.1 906.1,688.9 906.5,695.0 906.9,701.5 907.3,708.6 907.7,716.1 908.1,724.3 908.4,733.3 908.8,743.1 909.2,754.0 909.6,766.2 910.0,780.1 910.4,796.1 910.8,815.1 911.2,838.3 911.6,868.2 912.0,910.4 912.4,941.4 912.7,941.4 912.7,941.4 913.1,941.4 913.5,911.2 913.9,869.1 914.3,839.2 914.7,816.2 915.1,797.4 915.5,781.5 915.9,767.8 916.3,755.8 916.6,745.1 917.0,735.4 917.4,726.7 917.8,718.7 918.2,711.3 918.6,704.4 919.0,698.1 919.4,692.1 919.8,686.6 920.2,681.4 920.6,676.5 920.9,671.8 921.3,667.5 921.7,663.3 922.1,659.4 922.5,655.7 922.9,652.1 923.3,648.8 923.7,645.6 924.1,642.5 924.5,639.6 924.8,636.8 925.2,634.1 925.6,631.6 926.0,629.2 926.4,626.9 926.8,624.7 927.2,622.6 927.6,620.5 928.0,618.6 928.4,616.8 928.8,615.0 929.1,613.4 929.5,611.8 929.9,610.3 930.3,608.8 930.7,607.5 931.1,606.2 931.5,605.0 931.9,603.8 932.3,602.7 932.7,601.7 933.0,600.7 933.4,599.8 933.8,598.9 934.2,598.2 934.6,597.4 935.0,596.7 935.4,596.1 935.8,595.6 936.2,595.0 936.6,594.6 937.0,594.2 937.3,593.8 937.7,593.5 938.1,593.3 938.5,593.1 938.9,592.9 939.3,592.8 939.7,592.8 940.1,592.8 940.5,592.8 940.9,592.9 941.2,593.1 941.6,593.3 942.0,593.6 942.4,593.9 942.8,594.2 943.2,594.6 943.6,595.1 944.0,595.6 944.4,596.2 944.8,596.8 945.2,597.5 945.5,598.2 945.9,599.0 946.3,599.8 946.7,600.7 947.1,601.6 947.5,602.6 947.9,603.7 948.3,604.8 948.7,606.0 949.1,607.3 949.5,608.6 949.8,609.9 950.2,611.4 950.6,612.9 951.0,614.5 951.4,616.1 951.8,617.9 952.2,619.7 952.6,621.6 953.0,623.5 953.4,625.6 953.7,627.7 954.1,630.0 954.5,632.3 954.9,634.8 955.3,637.3 955.7,640.0 956.1,642.8 956.5,645.7 956.9,648.7 957.3,651.9 957.7,655.2 958.0,658.7 958.4,662.3 958.8,666.1 959.2,670.1 959.6,674.4 960.0,678.8 960.4,683.5 960.8,688.5 961.2,693.7 961.6,699.3 961.9,705.3 962.3,711.6 962.7,718.4 963.1,725.8 963.5,733.7 963.9,742.4 964.3,751.8 964.7,762.3 965.1,774.0 965.5,787.2 965.9,802.3 966.2,820.1 966.6,841.6 967.0,868.8 967.4,905.7 967.8,941.4 968.2,941.4 968.3,941.4 968.6,941.4 969.0,941.4 969.4,893.4 969.8,860.2 970.1,835.1 970.5,814.9 970.9,798.1 971.3,783.7 971.7,771.1 972.1,759.9 972.5,749.8 972.9,740.7 973.3,732.3 973.7,724.7 974.1,717.6 974.4,711.0 974.8,704.8 975.2,699.1 975.6,693.7 976.0,688.6 976.4,683.8 976.8,679.2 977.2,674.9 977.6,670.9 978.0,667.0 978.3,663.3 978.7,659.8 979.1,656.4 979.5,653.2 979.9,650.2 980.3,647.3 980.7,644.5 981.1,641.8 981.5,639.3 981.9,636.8 982.3,634.5 982.6,632.2 983.0,630.1 983.4,628.0 983.8,626.1 984.2,624.2 984.6,622.4 985.0,620.7 985.4,619.0 985.8,617.5 986.2,616.0 986.5,614.5 986.9,613.2 987.3,611.9 987.7,610.6 988.1,609.5 988.5,608.4 988.9,607.3 989.3,606.3 989.7,605.4 990.1,604.5 990.5,603.7 990.8,602.9 991.2,602.2 991.6,601.5 992.0,600.9 992.4,600.4 992.8,599.9 993.2,599.4 993.6,599.0 994.0,598.6 994.4,598.3 994.8,598.1 995.1,597.9 995.5,597.7 995.9,597.6 996.3,597.5 996.7,597.5 997.1,597.5 997.5,597.6 997.9,597.7 998.3,597.9 998.7,598.1 999.0,598.3 999.4,598.6 999.8,599.0 1000.2,599.4 1000.6,599.9 1001.0,600.4 1001.4,600.9 1001.8,601.5 1002.2,602.2 1002.6,602.9 1003.0,603.7 1003.3,604.5 1003.7,605.4 1004.1,606.3 1004.5,607.3 1004.9,608.3 1005.3,609.4 1005.7,610.5 1006.1,611.8 1006.5,613.0 1006.9,614.4 1007.2,615.8 1007.6,617.2 1008.0,618.8 1008.4,620.4 1008.8,622.1 1009.2,623.8 1009.6,625.6 1010.0,627.6 1010.4,629.6 1010.8,631.6 1011.2,633.8 1011.5,636.1 1011.9,638.4 1012.3,640.9 1012.7,643.5 1013.1,646.2 1013.5,649.0 1013.9,651.9 1014.3,655.0 1014.7,658.2 1015.1,661.5 1015.4,665.0 1015.8,668.7 1016.2,672.6 1016.6,676.6 1017.0,680.9 1017.4,685.4 1017.8,690.2 1018.2,695.2 1018.6,700.5 1019.0,706.2 1019.4,712.2 1019.7,718.7 1020.1,725.6 1020.5,733.1 1020.9,741.2 1021.3,750.1 1021.7,759.8 1022.1,770.6 1022.5,782.6 1022.9,796.3 1023.3,812.1 1023.6,830.8 1024.0,853.7 1024.4,883.2 1024.8,924.4 1025.2,941.4 1025.6,941.4 1025.6,941.4 1026.0,941.4 1026.4,930.3 1026.8,887.1 1027.2,856.7 1027.6,833.3 1027.9,814.2 1028.3,798.1 1028.7,784.3 1029.1,772.1 1029.5,761.2 1029.9,751.4 1030.3,742.5 1030.7,734.3 1031.1,726.8 1031.5,719.8 1031.8,713.3 1032.2,707.3 1032.6,701.6 1033.0,696.2 1033.4,691.2 1033.8,686.4 1034.2,681.9 1034.6,677.6 1035.0,673.6 1035.4,669.7 1035.8,666.0 1036.1,662.5 1036.5,659.2 1036.9,656.0 1037.3,652.9 1037.7,650.0 1038.1,647.2 1038.5,644.6 1038.9,642.0 1039.3,639.5 1039.7,637.2 1040.1,634.9 1040.4,632.8 1040.8,630.7 1041.2,628.7 1041.6,626.8 1042.0,625.0 1042.4,623.2 1042.8,621.6 1043.2,620.0 1043.6,618.5 1044.0,617.0 1044.3,615.6 1044.7,614.3 1045.1,613.0 1045.5,611.8 1045.9,610.7 1046.3,609.6 1046.7,608.6 1047.1,607.6 1047.5,606.7 1047.9,605.8 1048.3,605.0 1048.6,604.3 1049.0,603.6 1049.4,602.9 1049.8,602.3 1050.2,601.8 1050.6,601.3 1051.0,600.8 1051.4,600.4 1051.8,600.1 1052.2,599.8 1052.5,599.5 1052.9,599.3 1053.3,599.1 1053.7,599.0 1054.1,598.9 1054.5,598.9" fill="none" stroke="#0f6fc0" stroke-width="1.55" stroke-linejoin="round"/></svg>
<div class="t" style="left:936.88px;top:324.17px;font-size:20.00px;color:#262626;">0</div>
<div class="t" style="left:930.22px;top:384.10px;font-size:20.00px;color:#262626;">-5</div>
<div class="t" style="left:919.09px;top:444.03px;font-size:20.00px;color:#262626;">-10</div>
<div class="t" style="left:919.09px;top:503.96px;font-size:20.00px;color:#262626;">-15</div>
<div class="t" style="left:919.09px;top:563.89px;font-size:20.00px;color:#262626;">-20</div>
<div class="t" style="left:919.09px;top:623.82px;font-size:20.00px;color:#262626;">-25</div>
<div class="t" style="left:919.09px;top:683.75px;font-size:20.00px;color:#262626;">-30</div>
<div class="t" style="left:919.09px;top:743.68px;font-size:20.00px;color:#262626;">-35</div>
<div class="t" style="left:919.09px;top:803.61px;font-size:20.00px;color:#262626;">-40</div>
<div class="t" style="left:919.09px;top:863.54px;font-size:20.00px;color:#262626;">-45</div>
<div class="t" style="left:919.09px;top:923.47px;font-size:20.00px;color:#262626;">-50</div>
<div class="t" style="left:919.09px;top:983.40px;font-size:20.00px;color:#262626;">-55</div>
<div class="t" style="left:919.09px;top:1043.33px;font-size:20.00px;color:#262626;">-60</div>
<div class="t" style="left:919.09px;top:1103.26px;font-size:20.00px;color:#262626;">-65</div>
<div class="t" style="left:919.09px;top:1163.19px;font-size:20.00px;color:#262626;">-70</div>
<div class="t" style="left:947.64px;top:1195.77px;font-size:20.00px;color:#262626;">0</div>
<div class="t" style="left:1131.77px;top:1195.77px;font-size:20.00px;color:#262626;">200</div>
<div class="t" style="left:1327.03px;top:1195.77px;font-size:20.00px;color:#262626;">400</div>
<div class="t" style="left:1522.29px;top:1195.77px;font-size:20.00px;color:#262626;">600</div>
<div class="t" style="left:1717.55px;top:1195.77px;font-size:20.00px;color:#262626;">800</div>
<div class="t" style="left:1312.79px;top:261.38px;font-size:22.00px;color:#262626;transform:scaleX(1.0032);">Magnitude Response (dB)</div>
<div class="t" style="left:1365.29px;top:1225.38px;font-size:22.00px;color:#262626;transform:scaleX(1.0054);">Frequency (Hz)</div>
<div class="t" style="left:896.30px;top:737.90px;font-size:22px;color:#262626;transform:translate(-50%,-50%) rotate(-90deg) scaleX(0.9906);transform-origin:center">Magnitude (dB)</div>
<div class="r" style="left:1956.30px;top:181.50px;width:1.20px;height:1080.50px;background:#c8c8c8"></div>
<div class="r" style="left:1957.50px;top:181.50px;width:32.50px;height:1080.50px;background:#fff"></div>
<div class="r" style="left:1958.00px;top:182.00px;width:32.00px;height:207.50px;background:#e6e6e6"></div>
<div class="t" style="left:1972.30px;top:285.50px;font-size:17px;color:#222;transform:translate(-50%,-50%) rotate(90deg) scaleX(1.0605);transform-origin:center">ANALYSIS OPTIONS</div>
<svg class="s" style="left:1966.00px;top:1235.00px;" width="18.00" height="20.00" viewBox="0 0 18.00 20.00"><rect x="1" y="1" width="2.6" height="18" fill="#9a9a9a"/><path d="M15.5 1 V19 L4.5 10 Z" fill="#9a9a9a"/></svg>
<div class="r" style="left:0.00px;top:1262.00px;width:1990.00px;height:32.00px;background:#e6e6e6"></div>
<div class="r" style="left:0.00px;top:1261.00px;width:873.00px;height:1.00px;background:#a8a8a8"></div>
<svg class="s" style="left:0.00px;top:1282.00px;" width="12.00" height="12.00" viewBox="0 0 12.00 12.00"><path d="M0 0 Q0.5 11.5 12 12 L0 12 Z" fill="#d6d6d6"/><path d="M0.5 0 Q1 11 12 11.6" fill="none" stroke="#a8a8a8" stroke-width="1.2"/></svg>
<svg class="s" style="left:1978.00px;top:1282.00px;" width="12.00" height="12.00" viewBox="0 0 12.00 12.00"><path d="M12 0 Q11.5 11.5 0 12 L12 12 Z" fill="#d6d6d6"/><path d="M11.5 0 Q11 11 0 11.6" fill="none" stroke="#a8a8a8" stroke-width="1.2"/></svg>
<div class="t" style="left:1396.86px;top:1269.96px;font-size:18.00px;color:#222;">Analysis Sample Rate = 2 kHz | Frequency Normalization = Unnormalized</div>
</body></html>
